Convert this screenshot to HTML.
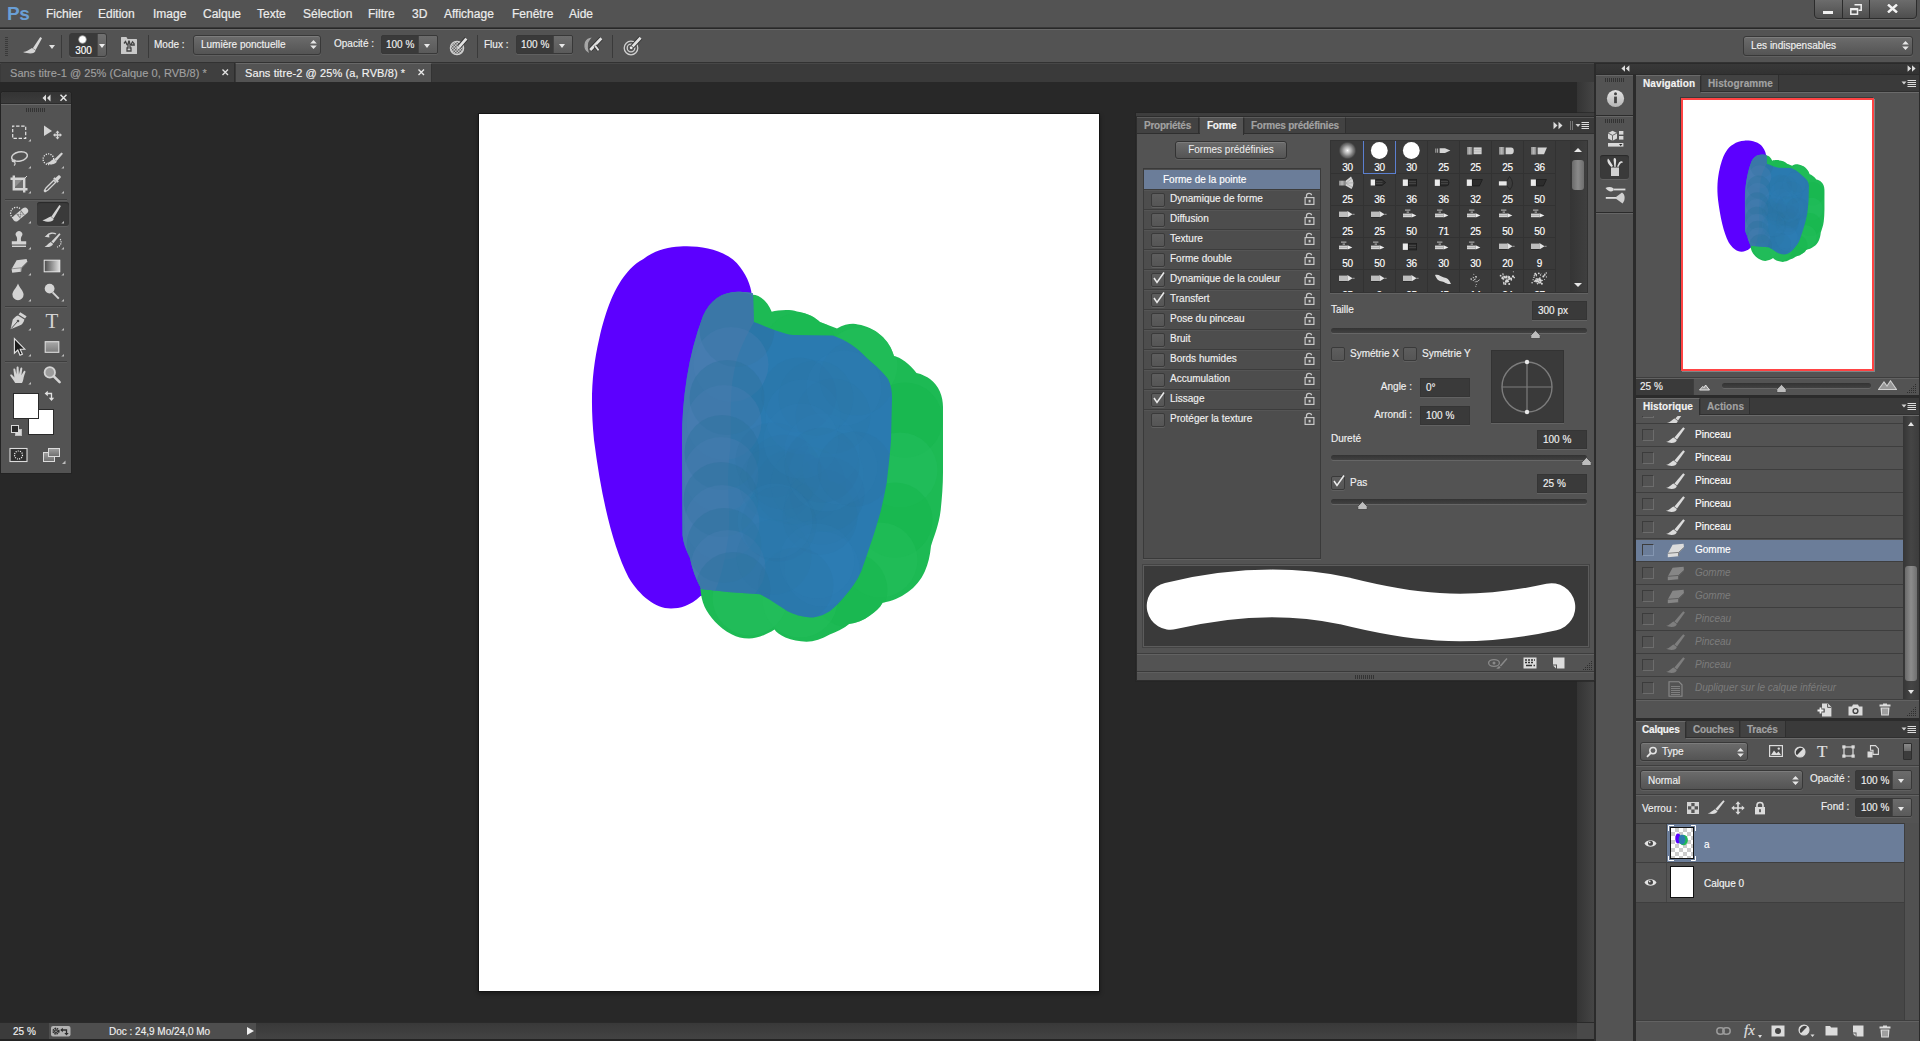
<!DOCTYPE html>
<html><head><meta charset="utf-8">
<style>
*{box-sizing:border-box;margin:0;padding:0}
html,body{width:1920px;height:1041px;overflow:hidden;background:#282828;font-family:"Liberation Sans",sans-serif;font-size:10px;color:#e8e8e8}
.a{position:absolute}
.t{position:absolute;white-space:nowrap;line-height:14px;-webkit-text-stroke:0.15px}
#menubar{left:0;top:0;width:1920px;height:28px;background:#535353;border-bottom:1px solid #383838}
#optbar{left:0;top:29px;width:1920px;height:34px;background:#535353;border-top:1px solid #686868;border-bottom:1px solid #323232}
#tabbar{left:0;top:63px;width:1595px;height:19px;background:#3a3a3a;box-shadow:inset 0 1px 0 #474747}
.m{position:absolute;-webkit-text-stroke:0.2px;top:7px;font-size:12px;line-height:14px;color:#ececec;white-space:nowrap}

.sep{position:absolute;top:5px;width:1px;height:23px;margin-left:1px;background:#3a3a3a}
.dd{position:absolute;border:1px solid #383838;border-radius:3px;background:linear-gradient(#6c6c6c,#545454);box-shadow:inset 0 1px 0 #7c7c7c,0 1px 0 #606060;color:#f0f0f0;font-size:10px}
.dd .t{left:7px}
.ud{position:absolute;width:7px;height:11px}
.inp{position:absolute;height:19px;border:1px solid #383838;border-radius:2px;background:#3a3a3a;box-shadow:0 1px 0 #606060;color:#f0f0f0;font-size:10px;overflow:hidden}
.inp .btn{position:absolute;right:0;top:0;bottom:0;width:19px;background:linear-gradient(#6c6c6c,#5a5a5a);border-left:1px solid #444}
.inp .btn:after{content:"";position:absolute;left:5px;top:8px;border:3.5px solid transparent;border-top:4px solid #e8e8e8;border-bottom:0}
.lbl{position:absolute;-webkit-text-stroke:0.15px;font-size:10px;line-height:14px;color:#f0f0f0;white-space:nowrap}
.b{font-weight:bold}
.cb{position:absolute;width:14px;height:14px;border:1px solid #3a3a3a;border-radius:2px;background:linear-gradient(#5e5e5e,#555);box-shadow:0 1px 0 #606060}
.fld{position:absolute;height:19px;background:#3a3a3a;border:1px solid #353535;box-shadow:0 1px 0 #626262;color:#f0f0f0}
</style></head><body>
<!-- MENUBAR -->
<div id="menubar" class="a">
<div class="a" style="left:7px;top:2px;font-size:19px;line-height:24px;font-weight:bold;color:#6a9fd6;letter-spacing:-0.3px">Ps</div>
<div class="m" style="left:46px">Fichier</div>
<div class="m" style="left:98px">Edition</div>
<div class="m" style="left:153px">Image</div>
<div class="m" style="left:203px">Calque</div>
<div class="m" style="left:257px">Texte</div>
<div class="m" style="left:303px">Sélection</div>
<div class="m" style="left:368px">Filtre</div>
<div class="m" style="left:412px">3D</div>
<div class="m" style="left:444px">Affichage</div>
<div class="m" style="left:512px">Fenêtre</div>
<div class="m" style="left:569px">Aide</div>
<div class="a" style="left:1814px;top:-1px;width:103px;height:20px;border:1px solid #2c2c2c;border-radius:0 0 4px 4px;background:linear-gradient(#6c6c6c,#4e4e4e);box-shadow:0 1px 0 #676767"></div>
<div class="a" style="left:1842px;top:0;width:1px;height:18px;background:#2c2c2c"></div><div class="a" style="left:1869px;top:0;width:1px;height:18px;background:#2c2c2c"></div>
<div class="a" style="left:1823px;top:11px;width:10px;height:3px;background:#f0f0f0"></div>
<svg class="a" style="left:1850px;top:4px" width="12" height="11" viewBox="0 0 12 11"><path d="M4.5 0.8 H11.2 V6.2 H8.5" fill="none" stroke="#f0f0f0" stroke-width="1.5"/><rect x="0.8" y="4.8" width="6.7" height="5.4" fill="none" stroke="#f0f0f0" stroke-width="1.5"/><path d="M0.8 5.2 H7.5" stroke="#f0f0f0" stroke-width="2.2"/></svg>
<svg class="a" style="left:1887px;top:4px" width="11" height="9" viewBox="0 0 11 9"><path d="M1 0.5 L10 8.5 M10 0.5 L1 8.5" stroke="#f4f4f4" stroke-width="2.4"/></svg>
</div>
<!-- OPTBAR -->
<div id="optbar" class="a">
<div class="a" style="left:5px;top:7px;width:3px;height:20px;background:repeating-linear-gradient(#3a3a3a 0 1px,transparent 1px 2px)"></div>
<svg class="a" style="left:22px;top:7px" width="20" height="17" viewBox="0 0 20 17"><path d="M18.3 0.1 L20 1.2 L13.6 13 L10.8 11.2Z" fill="#d8d8d8"/><path d="M10 11 L13.6 13.6 C13 16.8 7.5 17.4 1 15 C5 14.6 7 12.6 10 11Z" fill="#d4d4d4"/></svg>
<div class="a" style="left:49px;top:15px;border:3px solid transparent;border-top:4px solid #e0e0e0;border-bottom:0"></div>
<div class="sep" style="left:60px"></div>
<div class="a" style="left:69px;top:3px;width:38px;height:24px;border:1px solid #3a3a3a;border-radius:3px;background:#3a3a3a;box-shadow:0 1px 0 #636363;overflow:hidden">
 <div class="a" style="left:8px;top:1px;width:9px;height:9px;border-radius:50%;background:radial-gradient(#fff 45%,rgba(255,255,255,0) 75%)"></div>
 <div class="t" style="left:0;width:27px;text-align:center;top:10px;font-size:10px;line-height:13px;color:#fff">300</div>
 <div class="a" style="left:27px;top:0;width:10px;height:23px;background:linear-gradient(#707070,#5c5c5c);border-left:1px solid #484848"></div>
 <div class="a" style="left:29px;top:10px;border:3px solid transparent;border-top:4px solid #eee;border-bottom:0"></div>
</div>
<svg class="a" style="left:120px;top:6px" width="18" height="19" viewBox="0 0 18 19"><path d="M1 3 V1.6 Q1 1 1.6 1 H6.4 L7.6 3 H16.4 Q17 3 17 3.6 V17.4 Q17 18 16.4 18 H1.6 Q1 18 1 17.4Z" fill="#c9c9c9"/><path d="M4 7.5 L5.5 5.5 L7 8.5 L8 8.5 L8 12 L7 12 L7 15 L11 15 L11 12 L10 12 L10 8.5 L9.2 5.2 L8.8 5.2 L8 8.5 M10 8.5 L11 8.5 L12.5 5.8 L14 7.5 L14.2 9 L11 9" fill="none" stroke="#444" stroke-width="1.3"/></svg>
<div class="sep" style="left:147px"></div>
<div class="lbl" style="left:154px;top:8px">Mode :</div>
<div class="dd" style="left:193px;top:5px;width:128px;height:20px"><div class="t" style="top:2px">Lumière ponctuelle</div>
 <svg class="ud" style="left:116px;top:3px" viewBox="0 0 7 11"><path d="M0.2 4.4 L3.5 1 L6.8 4.4Z M0.2 6.6 L3.5 10 L6.8 6.6Z" fill="#e6e6e6"/></svg></div>
<div class="lbl" style="left:334px;top:7px">Opacité :</div>
<div class="inp" style="left:381px;top:5px;width:57px"><div class="t" style="left:4px;top:2px">100 %</div><div class="btn"></div></div>
<svg class="a" style="left:449px;top:7px" width="20" height="19" viewBox="0 0 20 19"><defs><pattern id="ck" width="3" height="3" patternUnits="userSpaceOnUse"><rect width="3" height="3" fill="#c4c4c4"/><rect width="1.5" height="1.5" fill="#666"/><rect x="1.5" y="1.5" width="1.5" height="1.5" fill="#666"/></pattern></defs><circle cx="8" cy="11" r="6.6" fill="url(#ck)" stroke="#d0d0d0" stroke-width="1.3"/><path d="M17.4 1.6 L10.4 9.6" stroke="#333" stroke-width="4.6" stroke-linecap="butt"/><path d="M17.4 1.6 L10.4 9.6" stroke="#e2e2e2" stroke-width="2.8"/><path d="M10.8 9.2 L8.4 11.6" stroke="#e2e2e2" stroke-width="1.6"/></svg>
<div class="sep" style="left:476px"></div>
<svg class="a" style="left:583px;top:7px" width="21" height="17" viewBox="0 0 21 17"><path d="M7 1.6 C1 3 0.5 11.5 5 14.6 C3.6 10 4 5 7 1.6Z" fill="#a8a8a8" stroke="#a8a8a8" stroke-width="1.2"/><path d="M18.4 1.2 L7.2 13" stroke="#333" stroke-width="4.6" stroke-linecap="butt"/><path d="M18.4 1.2 L7.2 13" stroke="#e2e2e2" stroke-width="2.8"/><path d="M12 8.6 L15.6 13.4" stroke="#333" stroke-width="3.4"/><path d="M12 8.6 L15.6 13.4" stroke="#e2e2e2" stroke-width="1.8"/></svg>
<svg class="a" style="left:622px;top:6px" width="21" height="20" viewBox="0 0 21 20"><circle cx="9" cy="12" r="6.8" fill="none" stroke="#cfcfcf" stroke-width="1.3"/><circle cx="9" cy="12" r="3.8" fill="none" stroke="#cfcfcf" stroke-width="1.3"/><path d="M18.6 1.8 L10.6 10.4" stroke="#333" stroke-width="4.6" stroke-linecap="butt"/><path d="M18.6 1.8 L10.6 10.4" stroke="#e2e2e2" stroke-width="2.8"/><circle cx="9.2" cy="11.8" r="1.4" fill="#f0f0f0"/></svg>
<div class="lbl" style="left:484px;top:8px">Flux :</div>
<div class="inp" style="left:516px;top:5px;width:57px"><div class="t" style="left:4px;top:2px">100 %</div><div class="btn"></div></div>
<div class="sep" style="left:611px"></div>
<div class="dd" style="left:1743px;top:6px;width:170px;height:20px"><div class="t" style="top:2px">Les indispensables</div>
 <svg class="ud" style="left:158px;top:3px" viewBox="0 0 7 11"><path d="M0.2 4.4 L3.5 1 L6.8 4.4Z M0.2 6.6 L3.5 10 L6.8 6.6Z" fill="#e6e6e6"/></svg></div>
</div>
<!-- TABBAR -->
<div id="tabbar" class="a">
<div class="a" style="left:1px;top:0;width:234px;height:19px;background:#3f3f3f;border-right:1px solid #2e2e2e"></div>
<div class="t" style="left:10px;top:3px;font-size:11px;letter-spacing:0.05px;color:#a0a0a0">Sans titre-1 @ 25% (Calque 0, RVB/8) *</div>
<svg class="a" style="left:222px;top:6px" width="7" height="7" viewBox="0 0 7 7"><path d="M0.5 0.5 L6 6 M6 0.5 L0.5 6" stroke="#e0e0e0" stroke-width="1.4"/></svg>
<div class="a" style="left:236px;top:0;width:196px;height:19px;background:#535353;border-right:1px solid #333;border-top:1px solid #686868"></div>
<div class="t" style="left:245px;top:3px;font-size:11px;letter-spacing:0.1px;color:#f2f2f2">Sans titre-2 @ 25% (a, RVB/8) *</div>
<svg class="a" style="left:418px;top:6px" width="7" height="7" viewBox="0 0 7 7"><path d="M0.5 0.5 L6 6 M6 0.5 L0.5 6" stroke="#e8e8e8" stroke-width="1.4"/></svg>
</div>
<!-- doc scrollbars -->
<div class="a" style="left:1577px;top:82px;width:17px;height:940px;background:linear-gradient(90deg,#343434,#454545)"></div>
<div class="a" style="left:1594px;top:63px;width:2px;height:978px;background:#2b2b2b"></div>
<!-- CANVAS -->
<div id="canvas" class="a" style="left:479px;top:114px;width:620px;height:877px;background:#fff;box-shadow:0 0 0 1px #141414,0 2px 4px 1px rgba(0,0,0,.35)"></div><svg class="a" style="left:479px;top:114px" width="620" height="877" viewBox="479 114 620 877"><defs><path id="bp" d="M680 246.5 C700 245 728 250 740 267 C748 278 752 288 752 300 L755 480 C755 540 735 590 700.5 596 C690 606 680 608.5 671 608.5 C655 608 640 596 628.6 577.4 C612 545 601 495 594 440 C590 400 592 370 599.2 338.7 C606 310 612 296 618.4 285 C626 272 634 264 643.4 259 C655 250 668 247 680 246.5Z"/><path id="bg" d="M720 320 L751.6 294.8 C758 294 767 300 771.7 311.7 C778 310 790 309 797 311.5 C808 313 816 318 820 322 L837 328.5 C845 324 853 323 858 324.5 C875 327 890 340 894 356 C900 357 910 364 916.5 373 C922 374 927 377 930 379 C939 386 943 396 943 407 L943 472 C943 485 942 498 940.7 510 C939 525 934 536 931 546 C930 556 928 564 925 571 C921 580 915 587 908 592 C900 598 892 601 882.6 602.7 C880 608 875 612 870 615.4 C864 620 856 623 849 624 C843 629 836 632 829.7 634.4 C822 639 814 641.5 806.5 641.8 C799 641.5 792 640 785.4 637.6 C780 635 776 632 774.5 629.5 C766 635 757 638.5 749 638.6 C742 638.5 737 637 732 634.4 C725 631 719 626 715 621.7 C710 616 707 612 704.7 607 C702 601 701 595 700.5 590 L700 330Z"/><path id="bo" d="M737.5 291.7 C745 291.7 750 292.5 753 293.5 L753.7 322 C765 326 780 333 793 335 L833 335.4 C846 340 858 348 866.8 358 C876 366 883 372 888 379 C891 385 892 391 892 398 L891 440 C890 455 888 470 886.8 482 C885 492 883 502 880.5 512 C877 524 874 535 870 545.7 C867 555 864 563 861.4 571 C857 581 851 589 844.5 596.4 C840 602 835 607 829.7 611.2 C824 615 817 617.5 810.7 617.5 C802 617 794 614.5 787.5 611.2 C779 606 770 599 760 594.3 L728 592 L701.5 589 C696 580 692 568 690 558 C686 550 683 542 682.5 535 L682 440 C682 400 688 355 703 316 C710 300 722 292 737.5 291.7Z"/><clipPath id="co"><use href="#bo"/></clipPath><clipPath id="cp"><use href="#bp"/></clipPath><clipPath id="cg"><use href="#bg"/></clipPath></defs><g id="blob"><use href="#bp" fill="#5c00ff"/><use href="#bg" fill="#1dba54"/><g clip-path="url(#cg)"><circle cx="905" cy="420" r="37.5" fill="#16b64c" opacity=".55"/><circle cx="900" cy="470" r="37.5" fill="#23be5c" opacity=".55"/><circle cx="895" cy="520" r="37.5" fill="#16b64c" opacity=".55"/><circle cx="880" cy="560" r="37.5" fill="#22bd5a" opacity=".55"/><circle cx="850" cy="590" r="37.5" fill="#17b74e" opacity=".55"/><circle cx="800" cy="600" r="37.5" fill="#22bd5a" opacity=".55"/><circle cx="750" cy="598" r="37.5" fill="#24be5c" opacity=".55"/><circle cx="860" cy="365" r="37.5" fill="#22bd5a" opacity=".55"/><circle cx="800" cy="350" r="37.5" fill="#1ab950" opacity=".55"/></g><use href="#bo" fill="#2a7ab0"/><g clip-path="url(#co)"><path d="M670 285 L754 285 L754 322 C747 335 738 350 734 372 C728 400 733 430 729 460 C726 490 732 520 727 545 C724 565 720 580 714 594 L670 594Z" fill="#447baf"/><circle cx="737" cy="329.5" r="37.5" fill="#2b719c" opacity=".38"/><circle cx="731" cy="364.5" r="37.5" fill="#4a7db4" opacity=".38"/><circle cx="727" cy="397.5" r="37.5" fill="#2b719c" opacity=".38"/><circle cx="724" cy="422.5" r="37.5" fill="#4a7db4" opacity=".38"/><circle cx="722" cy="452.5" r="37.5" fill="#2b719c" opacity=".38"/><circle cx="721" cy="474.5" r="37.5" fill="#4a7db4" opacity=".38"/><circle cx="721" cy="499.5" r="37.5" fill="#2b719c" opacity=".38"/><circle cx="722" cy="522.5" r="37.5" fill="#4a7db4" opacity=".38"/><circle cx="724" cy="545.5" r="37.5" fill="#2b719c" opacity=".38"/><circle cx="728" cy="567.5" r="37.5" fill="#4a7db4" opacity=".38"/><circle cx="733" cy="589.5" r="37.5" fill="#2b719c" opacity=".38"/><circle cx="799" cy="395" r="37.5" fill="#2a6f9e" opacity=".16"/><circle cx="777" cy="483" r="37.5" fill="#2b749f" opacity=".16"/><circle cx="822" cy="569" r="37.5" fill="#2f82c0" opacity=".16"/><circle cx="773" cy="460" r="37.5" fill="#2a6f9e" opacity=".16"/><circle cx="792" cy="487" r="37.5" fill="#2a6f9e" opacity=".16"/><circle cx="844" cy="388" r="37.5" fill="#2f82c0" opacity=".16"/><circle cx="827" cy="494" r="37.5" fill="#2a6f9e" opacity=".16"/><circle cx="822" cy="451" r="37.5" fill="#2f82c0" opacity=".16"/><circle cx="774" cy="557" r="37.5" fill="#2b749f" opacity=".16"/><circle cx="808" cy="484" r="37.5" fill="#2b749f" opacity=".16"/><circle cx="820" cy="517" r="37.5" fill="#2a6f9e" opacity=".16"/><circle cx="822" cy="507" r="37.5" fill="#2b749f" opacity=".16"/><circle cx="779" cy="524" r="37.5" fill="#2a6f9e" opacity=".16"/><circle cx="826" cy="474" r="37.5" fill="#3380bc" opacity=".16"/><circle cx="840" cy="467" r="37.5" fill="#3380bc" opacity=".16"/><circle cx="803" cy="417" r="37.5" fill="#2f82c0" opacity=".16"/><circle cx="833" cy="416" r="37.5" fill="#2b749f" opacity=".16"/><circle cx="817" cy="561" r="37.5" fill="#3380bc" opacity=".16"/><circle cx="796" cy="585" r="37.5" fill="#2a6f9e" opacity=".16"/><circle cx="816" cy="398" r="37.5" fill="#2b749f" opacity=".16"/><circle cx="784" cy="472" r="37.5" fill="#2a6f9e" opacity=".16"/><circle cx="857" cy="378" r="37.5" fill="#2b749f" opacity=".16"/><circle cx="801" cy="441" r="37.5" fill="#3380bc" opacity=".16"/><circle cx="822" cy="465" r="37.5" fill="#2a6f9e" opacity=".16"/><circle cx="855" cy="469" r="37.5" fill="#2a6f9e" opacity=".16"/><circle cx="775" cy="521" r="37.5" fill="#3380bc" opacity=".16"/></g></g></svg>
<!-- TOOLS -->
<div class="a" style="left:1px;top:92px;width:70px;height:381px;background:#535353;border-radius:3px 3px 0 0;box-shadow:0 0 0 1px #232323"></div>
<div class="a" style="left:1px;top:92px;width:70px;height:12px;background:linear-gradient(#343434,#3b3b3b);border-radius:3px 3px 0 0;border-bottom:1px solid #2c2c2c"></div>
<div class="a" style="left:1px;top:104px;width:70px;height:1px;background:#6a6a6a"></div>
<svg class="a" style="left:42px;top:94px" width="26" height="8" viewBox="0 0 26 8"><path d="M4 0.5 V7.5 L0.5 4Z M8.5 0.5 V7.5 L5 4Z" fill="#dcdcdc"/><path d="M18.5 0.8 L24.5 6.8 M24.5 0.8 L18.5 6.8" stroke="#e4e4e4" stroke-width="1.5"/></svg>
<div class="a" style="left:26px;top:108px;width:20px;height:4px;background:repeating-linear-gradient(90deg,#333 0 1px,transparent 1px 2px)"></div>
<div class="a" style="left:37px;top:202px;width:32px;height:24px;background:#3a3a3a;border-radius:3px;box-shadow:inset 0 1px 1px #2a2a2a,0 1px 0 #606060"></div>
<div class="a" style="left:5px;top:199px;width:62px;height:2px;border-top:1px solid #3e3e3e;border-bottom:1px solid #5d5d5d"></div>
<div class="a" style="left:5px;top:306px;width:62px;height:2px;border-top:1px solid #3e3e3e;border-bottom:1px solid #5d5d5d"></div>
<div class="a" style="left:5px;top:361px;width:62px;height:2px;border-top:1px solid #3e3e3e;border-bottom:1px solid #5d5d5d"></div>
<svg class="a" style="left:7px;top:120px" width="24" height="24" viewBox="0 0 24 24"><rect x="5.7" y="6.1" width="13" height="12.2" fill="none" stroke="#e4e4e4" stroke-width="1.2" stroke-dasharray="3.4 1.7" stroke-dashoffset="1.7"/><path d="M25 19.5 V23 H21.5Z" fill="#bdbdbd" transform="translate(-0.2,-1.4)"/></svg>
<svg class="a" style="left:40px;top:120px" width="24" height="24" viewBox="0 0 24 24"><path d="M4 5.5 V16 L12 11Z" fill="#d4d4d4"/><path d="M17.5 10.5 L19.5 12.8 H18.2 V14.3 H19.7 V13 L22 15 L19.7 17 V15.7 H18.2 V17.2 H19.5 L17.5 19.5 L15.5 17.2 H16.8 V15.7 H15.3 V17 L13 15 L15.3 13 V14.3 H16.8 V12.8 H15.5Z" fill="#d4d4d4"/></svg>
<svg class="a" style="left:7px;top:147px" width="24" height="24" viewBox="0 0 24 24"><ellipse cx="12.5" cy="9.5" rx="8" ry="4.6" transform="rotate(-12 12.5 9.5)" fill="none" stroke="#d4d4d4" stroke-width="1.5"/><path d="M6 12 C4.5 13 5 15 7 14.6 C9 14.2 8 12.6 6.8 13.2 M7.2 14.6 C8.6 16 8.2 17.5 7 18.5" fill="none" stroke="#d4d4d4" stroke-width="1.2"/><path d="M25 19.5 V23 H21.5Z" fill="#bdbdbd" transform="translate(-0.2,-1.4)"/></svg>
<svg class="a" style="left:40px;top:147px" width="24" height="24" viewBox="0 0 24 24"><circle cx="8.4" cy="12.2" r="5.3" fill="none" stroke="#e6e6e6" stroke-width="1.3" stroke-dasharray="1.2 1.2"/><path d="M21.4 5.4 L23 6.8 L16.6 14 L14.4 12.2Z" fill="#d4d4d4"/><path d="M14 12 L16.8 14.4 C15.8 17.2 11 18.2 6 16.2 C9.6 15.8 11 13.2 14 12Z" fill="#d4d4d4"/><path d="M25 19.5 V23 H21.5Z" fill="#bdbdbd" transform="translate(-0.2,-1.4)"/></svg>
<svg class="a" style="left:7px;top:172px" width="24" height="24" viewBox="0 0 24 24"><path d="M6.8 3.5 V17.2 H20.5 M3.5 6.8 H17.2 V20.5" fill="none" stroke="#d4d4d4" stroke-width="2.4"/><path d="M8 16 L20 4" stroke="#d4d4d4" stroke-width="1"/><path d="M8 8 H16 V16 H8Z" fill="#6e6e6e"/><path d="M8 8 H15 L8 15Z" fill="#909090"/><path d="M25 19.5 V23 H21.5Z" fill="#bdbdbd" transform="translate(-0.2,-1.4)"/></svg>
<svg class="a" style="left:40px;top:172px" width="24" height="24" viewBox="0 0 24 24"><path d="M18.2 3.4 C19.6 2.4 21.6 4.4 20.6 5.8 L18 8.6 L18.8 9.4 L17.4 10.8 L13.2 6.6 L14.6 5.2 L15.4 6Z" fill="#d4d4d4"/><path d="M13.8 8.2 L15.8 10.2 L8 18 L5.5 19.5 L4.5 18.5 L6 16Z" fill="none" stroke="#d4d4d4" stroke-width="1.3"/><path d="M4.3 19.7 L5.8 18.2" stroke="#d4d4d4" stroke-width="2"/><path d="M25 19.5 V23 H21.5Z" fill="#bdbdbd" transform="translate(-0.2,-1.4)"/></svg>
<svg class="a" style="left:7px;top:202px" width="24" height="24" viewBox="0 0 24 24"><path d="M6 16 A5.5 5.5 0 1 1 13 6.5" fill="none" stroke="#e6e6e6" stroke-width="1.3" stroke-dasharray="1.2 1.2"/><rect x="4.5" y="9.3" width="18" height="6.4" rx="3.2" transform="rotate(-40 13.5 12.5)" fill="#d4d4d4"/><g transform="rotate(-40 13.5 12.5)" fill="#777"><rect x="10.6" y="9.3" width="0.9" height="6.4"/><rect x="15.6" y="9.3" width="0.9" height="6.4"/><circle cx="12.3" cy="11.3" r=".6"/><circle cx="14.5" cy="11.3" r=".6"/><circle cx="12.3" cy="13.7" r=".6"/><circle cx="14.5" cy="13.7" r=".6"/><circle cx="13.4" cy="12.5" r=".6"/></g><path d="M25 19.5 V23 H21.5Z" fill="#bdbdbd" transform="translate(-0.2,-1.4)"/></svg>
<svg class="a" style="left:40px;top:202px" width="24" height="24" viewBox="0 0 24 24"><path d="M19.4 3 L20.9 4 L13.6 16.4 L11.2 14.8Z" fill="#d4d4d4"/><path d="M10.6 14.6 L13.7 17 C13 19.8 8.2 20.8 2.4 18.2 C6.2 17.7 7.5 15.8 10.6 14.6Z" fill="#d4d4d4"/><path d="M25 19.5 V23 H21.5Z" fill="#bdbdbd" transform="translate(-0.2,-1.4)"/></svg>
<svg class="a" style="left:7px;top:228px" width="24" height="24" viewBox="0 0 24 24"><path d="M9.5 8.6 A3.3 3.3 0 1 1 14.5 8.6 C13.6 10.2 13.8 12 14.2 13.2 H19.2 V16.5 H4.8 V13.2 H9.8 C10.2 12 10.4 10.2 9.5 8.6Z" fill="#d4d4d4"/><rect x="5" y="17.6" width="14" height="1.4" fill="#d4d4d4"/><path d="M25 19.5 V23 H21.5Z" fill="#bdbdbd" transform="translate(-0.2,-1.4)"/></svg>
<svg class="a" style="left:40px;top:228px" width="24" height="24" viewBox="0 0 24 24"><path d="M19.3 5.2 L20.6 6.3 L13.4 15.2 L11.4 13.6Z" fill="#d4d4d4"/><path d="M10.8 14 L13.1 15.9 C12.2 18.2 8.7 19.6 4.6 18.8 C7.4 17.8 7.8 15.4 10.8 14Z" fill="#d4d4d4"/><path d="M7 8 C9 5 13 4.4 16 6" fill="none" stroke="#d4d4d4" stroke-width="1.4"/><path d="M4.6 8.8 L9 5.6 L9.4 9.6Z" fill="#d4d4d4"/><path d="M17 19 A5 5 0 0 0 19.6 10.5" fill="none" stroke="#e6e6e6" stroke-width="1.2" stroke-dasharray="1.1 1.1"/><path d="M25 19.5 V23 H21.5Z" fill="#bdbdbd" transform="translate(-0.2,-1.4)"/></svg>
<svg class="a" style="left:7px;top:254px" width="24" height="24" viewBox="0 0 24 24"><path d="M9.6 6.2 L19.6 5 L20.4 8 L14.4 14.2 L14 17.8 L5.2 18.8 L4.6 15 Z" fill="#d4d4d4"/><path d="M4.8 14.8 L14.2 13.8 L20.2 7.8" fill="none" stroke="#8a8a8a" stroke-width="0.9"/><path d="M14.2 13.8 L14 17.6" stroke="#8a8a8a" stroke-width="0.9"/><path d="M25 19.5 V23 H21.5Z" fill="#bdbdbd" transform="translate(-0.2,-1.4)"/></svg>
<svg class="a" style="left:40px;top:254px" width="24" height="24" viewBox="0 0 24 24"><defs><linearGradient id="gg"><stop offset="0" stop-color="#4a4a4a"/><stop offset="1" stop-color="#e0e0e0"/></linearGradient></defs><rect x="4.2" y="6.2" width="15.6" height="11.6" fill="url(#gg)" stroke="#e8e8e8" stroke-width="1"/><path d="M25 19.5 V23 H21.5Z" fill="#bdbdbd" transform="translate(-0.2,-1.4)"/></svg>
<svg class="a" style="left:7px;top:280px" width="24" height="24" viewBox="0 0 24 24"><path d="M11 3.6 C12.4 8 16.6 11 16.6 14.6 A5.6 5.6 0 0 1 5.4 14.6 C5.4 11 9.6 8 11 3.6Z" fill="#d4d4d4"/><path d="M25 19.5 V23 H21.5Z" fill="#bdbdbd" transform="translate(-0.2,-1.4)"/></svg>
<svg class="a" style="left:40px;top:280px" width="24" height="24" viewBox="0 0 24 24"><circle cx="9.6" cy="8.6" r="4.9" fill="#d4d4d4"/><path d="M12.6 12.4 L18.8 18.6" stroke="#d4d4d4" stroke-width="2"/><path d="M25 19.5 V23 H21.5Z" fill="#bdbdbd" transform="translate(-0.2,-1.4)"/></svg>
<svg class="a" style="left:7px;top:309px" width="24" height="24" viewBox="0 0 24 24"><path d="M13.2 3.2 L19.6 7.2 L18 9.6 L11.6 5.6Z" fill="#d4d4d4"/><path d="M11 6.4 L17.4 10.4 C16.8 13.4 15 15.4 12.6 16.6 L3.6 20.2 L5.8 10.6 C7.4 8.4 9 7 11 6.4Z" fill="#d4d4d4"/><path d="M4.2 19.6 L10.6 12.4" stroke="#555" stroke-width="1"/><circle cx="11" cy="12" r="1.3" fill="#555"/><path d="M25 19.5 V23 H21.5Z" fill="#bdbdbd" transform="translate(-0.2,-1.4)"/></svg>
<svg class="a" style="left:40px;top:309px" width="24" height="24" viewBox="0 0 24 24"><text x="12" y="19.4" text-anchor="middle" font-family="Liberation Serif" font-size="21" fill="#d4d4d4">T</text><path d="M25 19.5 V23 H21.5Z" fill="#bdbdbd" transform="translate(-0.2,-1.4)"/></svg>
<svg class="a" style="left:7px;top:335px" width="24" height="24" viewBox="0 0 24 24"><path d="M7.4 3.6 V18.2 L10.8 15 L13 20.2 L15.4 19.2 L13.2 14.2 H17.8Z" fill="#1e1e1e" stroke="#e4e4e4" stroke-width="1.1" stroke-linejoin="miter"/><path d="M25 19.5 V23 H21.5Z" fill="#bdbdbd" transform="translate(-0.2,-1.4)"/></svg>
<svg class="a" style="left:40px;top:335px" width="24" height="24" viewBox="0 0 24 24"><defs><linearGradient id="rg" x2="0" y2="1"><stop offset="0" stop-color="#a8a8a8"/><stop offset="1" stop-color="#7c7c7c"/></linearGradient></defs><rect x="5.2" y="6.7" width="13.6" height="10.6" fill="url(#rg)" stroke="#dcdcdc" stroke-width="1.1"/><path d="M25 19.5 V23 H21.5Z" fill="#bdbdbd" transform="translate(-0.2,-1.4)"/></svg>
<svg class="a" style="left:7px;top:363px" width="24" height="24" viewBox="0 0 24 24"><path d="M8.2 20 C6.4 17 4.2 14.6 3.2 12.6 C2.8 11.6 4.2 11 5 11.8 L7.4 14.4 L6.4 6.6 C6.2 5.2 8 5 8.3 6.3 L9.4 11.6 L9.6 4.6 C9.6 3.2 11.5 3.2 11.6 4.6 L11.9 11.4 L13.4 5.2 C13.7 3.9 15.5 4.3 15.3 5.7 L14.4 12.2 L16.6 8.4 C17.3 7.2 18.9 8 18.4 9.3 C17.4 12 16.8 13.6 16.4 16 C16.2 17.6 15.6 18.8 15 20Z" fill="#d4d4d4"/><path d="M25 19.5 V23 H21.5Z" fill="#bdbdbd" transform="translate(-0.2,-1.4)"/></svg>
<svg class="a" style="left:40px;top:363px" width="24" height="24" viewBox="0 0 24 24"><circle cx="9.8" cy="9.4" r="5.2" fill="#9c9c9c" stroke="#d4d4d4" stroke-width="1.8"/><path d="M13.8 13.4 L19.6 19.2" stroke="#d4d4d4" stroke-width="2.6" stroke-linecap="round"/></svg>
<div class="a" style="left:28px;top:409px;width:26px;height:26px;background:#fff;border:1px solid #2a2a2a;box-shadow:inset 0 0 0 1px #fff"></div>
<div class="a" style="left:13px;top:393px;width:26px;height:26px;background:#fff;border:1px solid #2a2a2a"></div>
<svg class="a" style="left:44px;top:390px" width="12" height="12" viewBox="0 0 12 12"><path d="M3 3.5 H7.5 V8" fill="none" stroke="#e0e0e0" stroke-width="1.3"/><path d="M0.6 3.5 L3.8 0.8 V6.2Z M7.5 11 L4.8 7.8 H10.2Z" fill="#e0e0e0"/></svg>
<div class="a" style="left:15px;top:429px;width:7px;height:7px;background:#d8d8d8;border:1px solid #bdbdbd"></div><div class="a" style="left:11px;top:425px;width:8px;height:8px;background:#2a2a2a;border:1px solid #d8d8d8"></div>
<svg class="a" style="left:9px;top:447px" width="20" height="16" viewBox="0 0 20 16"><rect x="1" y="1.5" width="17" height="13" fill="#2e2e2e" stroke="#dcdcdc" stroke-width="1.1"/><circle cx="9.5" cy="8" r="4" fill="none" stroke="#f0f0f0" stroke-width="1.2" stroke-dasharray="1.1 1.1"/></svg>
<svg class="a" style="left:42px;top:447px" width="24" height="18" viewBox="0 0 24 18"><defs><linearGradient id="sg" x2="0" y2="1"><stop offset="0" stop-color="#a0a0a0"/><stop offset="1" stop-color="#6e6e6e"/></linearGradient></defs><rect x="1.5" y="5.5" width="11" height="9" fill="url(#sg)" stroke="#dcdcdc"/><rect x="6.5" y="1.5" width="11" height="8" fill="url(#sg)" stroke="#dcdcdc"/><path d="M23.5 13.5 V17 H20Z" fill="#bdbdbd"/></svg>
<!-- TOOLS_END -->
<!-- BRUSHPANEL -->
<div class="a" style="left:1135px;top:112px;width:460px;height:570px;background:#232323;opacity:.6"></div>
<div class="a" style="left:1136px;top:113px;width:459px;height:568px;background:#2c2c2c"></div>
<div class="a" style="left:1136px;top:113px;width:458px;height:3px;background:#3d3d3d"></div>
<div class="a" style="left:1137px;top:117px;width:457px;height:563px;background:#535353"></div>
<div class="a" style="left:1137px;top:117px;width:457px;height:17px;background:#3a3a3a;border-bottom:1px solid #2f2f2f;border-top:1px solid #555"></div>
<div class="a" style="left:1137px;top:117px;width:62px;height:16px;background:#424242;border-right:1px solid #2f2f2f;border-top:1px solid #5a5a5a"></div>
<div class="a" style="left:1200px;top:117px;width:44px;height:18px;background:#535353;border-right:1px solid #2f2f2f;border-top:1px solid #6a6a6a"></div>
<div class="a" style="left:1245px;top:117px;width:101px;height:16px;background:#424242;border-right:1px solid #2f2f2f;border-top:1px solid #5a5a5a"></div>
<div class="t b" style="left:1144px;top:119px;color:#a2a2a2;letter-spacing:-0.25px">Propriétés</div>
<div class="t b" style="left:1207px;top:119px;color:#f4f4f4;letter-spacing:-0.25px">Forme</div>
<div class="t b" style="left:1251px;top:119px;color:#a2a2a2;letter-spacing:-0.25px">Formes prédéfinies</div>
<svg class="a" style="left:1553px;top:121px" width="38" height="9" viewBox="0 0 38 9"><path d="M0.5 0.8 L4.5 4.5 L0.5 8.2Z M5.5 0.8 L9.5 4.5 L5.5 8.2Z" fill="#dcdcdc"/><path d="M17.5 0 V9 M19.5 0 V9" stroke="#777" stroke-width="1"/><path d="M22.5 3 H27.5 L25 6Z" fill="#d0d0d0"/><path d="M28.5 1.5 H36 M28.5 3.5 H36 M28.5 5.5 H36 M28.5 7.5 H36" stroke="#dcdcdc" stroke-width="1"/></svg>
<div class="dd" style="left:1175px;top:141px;width:112px;height:18px;text-align:center;line-height:15px;border-color:#333">Formes prédéfinies</div>
<div class="a" style="left:1143px;top:168px;width:178px;height:391px;background:#4d4d4d;border:1px solid #3a3a3a;box-shadow:0 1px 0 #606060"></div>
<div class="a" style="left:1144px;top:170px;width:176px;height:19px;background:#6b7d99"></div>
<div class="t" style="left:1163px;top:173px;color:#fff">Forme de la pointe</div>
<div class="a" style="left:1144px;top:189px;width:176px;height:2px;background:#3c3c3c;border-bottom:1px solid #555"></div>
<div class="cb" style="left:1151px;top:193px"></div>
<div class="t" style="left:1170px;top:192px;color:#f0f0f0">Dynamique de forme</div>
<svg class="a" style="left:1304px;top:192px" width="11" height="13" viewBox="0 0 11 13"><path d="M2.5 6 V3.6 C2.5 0.6 7.5 0.6 7.5 3.2" fill="none" stroke="#c8c8c8" stroke-width="1.3"/><rect x="1.1" y="5.6" width="8.8" height="6.8" fill="#4d4d4d" stroke="#c8c8c8" stroke-width="1.2"/><rect x="4.6" y="7.8" width="2" height="2.6" fill="#c8c8c8"/></svg>
<div class="a" style="left:1144px;top:209px;width:176px;height:2px;background:#3c3c3c;border-bottom:1px solid #555"></div>
<div class="cb" style="left:1151px;top:213px"></div>
<div class="t" style="left:1170px;top:212px;color:#f0f0f0">Diffusion</div>
<svg class="a" style="left:1304px;top:212px" width="11" height="13" viewBox="0 0 11 13"><path d="M2.5 6 V3.6 C2.5 0.6 7.5 0.6 7.5 3.2" fill="none" stroke="#c8c8c8" stroke-width="1.3"/><rect x="1.1" y="5.6" width="8.8" height="6.8" fill="#4d4d4d" stroke="#c8c8c8" stroke-width="1.2"/><rect x="4.6" y="7.8" width="2" height="2.6" fill="#c8c8c8"/></svg>
<div class="a" style="left:1144px;top:229px;width:176px;height:2px;background:#3c3c3c;border-bottom:1px solid #555"></div>
<div class="cb" style="left:1151px;top:233px"></div>
<div class="t" style="left:1170px;top:232px;color:#f0f0f0">Texture</div>
<svg class="a" style="left:1304px;top:232px" width="11" height="13" viewBox="0 0 11 13"><path d="M2.5 6 V3.6 C2.5 0.6 7.5 0.6 7.5 3.2" fill="none" stroke="#c8c8c8" stroke-width="1.3"/><rect x="1.1" y="5.6" width="8.8" height="6.8" fill="#4d4d4d" stroke="#c8c8c8" stroke-width="1.2"/><rect x="4.6" y="7.8" width="2" height="2.6" fill="#c8c8c8"/></svg>
<div class="a" style="left:1144px;top:249px;width:176px;height:2px;background:#3c3c3c;border-bottom:1px solid #555"></div>
<div class="cb" style="left:1151px;top:253px"></div>
<div class="t" style="left:1170px;top:252px;color:#f0f0f0">Forme double</div>
<svg class="a" style="left:1304px;top:252px" width="11" height="13" viewBox="0 0 11 13"><path d="M2.5 6 V3.6 C2.5 0.6 7.5 0.6 7.5 3.2" fill="none" stroke="#c8c8c8" stroke-width="1.3"/><rect x="1.1" y="5.6" width="8.8" height="6.8" fill="#4d4d4d" stroke="#c8c8c8" stroke-width="1.2"/><rect x="4.6" y="7.8" width="2" height="2.6" fill="#c8c8c8"/></svg>
<div class="a" style="left:1144px;top:269px;width:176px;height:2px;background:#3c3c3c;border-bottom:1px solid #555"></div>
<div class="cb" style="left:1151px;top:273px"></div><svg class="a" style="left:1151px;top:271px" width="15" height="15" viewBox="0 0 15 15"><path d="M3 7 L6 11.5 L13 1.5" fill="none" stroke="#ececec" stroke-width="1.5"/></svg>
<div class="t" style="left:1170px;top:272px;color:#f0f0f0">Dynamique de la couleur</div>
<svg class="a" style="left:1304px;top:272px" width="11" height="13" viewBox="0 0 11 13"><path d="M2.5 6 V3.6 C2.5 0.6 7.5 0.6 7.5 3.2" fill="none" stroke="#c8c8c8" stroke-width="1.3"/><rect x="1.1" y="5.6" width="8.8" height="6.8" fill="#4d4d4d" stroke="#c8c8c8" stroke-width="1.2"/><rect x="4.6" y="7.8" width="2" height="2.6" fill="#c8c8c8"/></svg>
<div class="a" style="left:1144px;top:289px;width:176px;height:2px;background:#3c3c3c;border-bottom:1px solid #555"></div>
<div class="cb" style="left:1151px;top:293px"></div><svg class="a" style="left:1151px;top:291px" width="15" height="15" viewBox="0 0 15 15"><path d="M3 7 L6 11.5 L13 1.5" fill="none" stroke="#ececec" stroke-width="1.5"/></svg>
<div class="t" style="left:1170px;top:292px;color:#f0f0f0">Transfert</div>
<svg class="a" style="left:1304px;top:292px" width="11" height="13" viewBox="0 0 11 13"><path d="M2.5 6 V3.6 C2.5 0.6 7.5 0.6 7.5 3.2" fill="none" stroke="#c8c8c8" stroke-width="1.3"/><rect x="1.1" y="5.6" width="8.8" height="6.8" fill="#4d4d4d" stroke="#c8c8c8" stroke-width="1.2"/><rect x="4.6" y="7.8" width="2" height="2.6" fill="#c8c8c8"/></svg>
<div class="a" style="left:1144px;top:309px;width:176px;height:2px;background:#3c3c3c;border-bottom:1px solid #555"></div>
<div class="cb" style="left:1151px;top:313px"></div>
<div class="t" style="left:1170px;top:312px;color:#f0f0f0">Pose du pinceau</div>
<svg class="a" style="left:1304px;top:312px" width="11" height="13" viewBox="0 0 11 13"><path d="M2.5 6 V3.6 C2.5 0.6 7.5 0.6 7.5 3.2" fill="none" stroke="#c8c8c8" stroke-width="1.3"/><rect x="1.1" y="5.6" width="8.8" height="6.8" fill="#4d4d4d" stroke="#c8c8c8" stroke-width="1.2"/><rect x="4.6" y="7.8" width="2" height="2.6" fill="#c8c8c8"/></svg>
<div class="a" style="left:1144px;top:329px;width:176px;height:2px;background:#3c3c3c;border-bottom:1px solid #555"></div>
<div class="cb" style="left:1151px;top:333px"></div>
<div class="t" style="left:1170px;top:332px;color:#f0f0f0">Bruit</div>
<svg class="a" style="left:1304px;top:332px" width="11" height="13" viewBox="0 0 11 13"><path d="M2.5 6 V3.6 C2.5 0.6 7.5 0.6 7.5 3.2" fill="none" stroke="#c8c8c8" stroke-width="1.3"/><rect x="1.1" y="5.6" width="8.8" height="6.8" fill="#4d4d4d" stroke="#c8c8c8" stroke-width="1.2"/><rect x="4.6" y="7.8" width="2" height="2.6" fill="#c8c8c8"/></svg>
<div class="a" style="left:1144px;top:349px;width:176px;height:2px;background:#3c3c3c;border-bottom:1px solid #555"></div>
<div class="cb" style="left:1151px;top:353px"></div>
<div class="t" style="left:1170px;top:352px;color:#f0f0f0">Bords humides</div>
<svg class="a" style="left:1304px;top:352px" width="11" height="13" viewBox="0 0 11 13"><path d="M2.5 6 V3.6 C2.5 0.6 7.5 0.6 7.5 3.2" fill="none" stroke="#c8c8c8" stroke-width="1.3"/><rect x="1.1" y="5.6" width="8.8" height="6.8" fill="#4d4d4d" stroke="#c8c8c8" stroke-width="1.2"/><rect x="4.6" y="7.8" width="2" height="2.6" fill="#c8c8c8"/></svg>
<div class="a" style="left:1144px;top:369px;width:176px;height:2px;background:#3c3c3c;border-bottom:1px solid #555"></div>
<div class="cb" style="left:1151px;top:373px"></div>
<div class="t" style="left:1170px;top:372px;color:#f0f0f0">Accumulation</div>
<svg class="a" style="left:1304px;top:372px" width="11" height="13" viewBox="0 0 11 13"><path d="M2.5 6 V3.6 C2.5 0.6 7.5 0.6 7.5 3.2" fill="none" stroke="#c8c8c8" stroke-width="1.3"/><rect x="1.1" y="5.6" width="8.8" height="6.8" fill="#4d4d4d" stroke="#c8c8c8" stroke-width="1.2"/><rect x="4.6" y="7.8" width="2" height="2.6" fill="#c8c8c8"/></svg>
<div class="a" style="left:1144px;top:389px;width:176px;height:2px;background:#3c3c3c;border-bottom:1px solid #555"></div>
<div class="cb" style="left:1151px;top:393px"></div><svg class="a" style="left:1151px;top:391px" width="15" height="15" viewBox="0 0 15 15"><path d="M3 7 L6 11.5 L13 1.5" fill="none" stroke="#ececec" stroke-width="1.5"/></svg>
<div class="t" style="left:1170px;top:392px;color:#f0f0f0">Lissage</div>
<svg class="a" style="left:1304px;top:392px" width="11" height="13" viewBox="0 0 11 13"><path d="M2.5 6 V3.6 C2.5 0.6 7.5 0.6 7.5 3.2" fill="none" stroke="#c8c8c8" stroke-width="1.3"/><rect x="1.1" y="5.6" width="8.8" height="6.8" fill="#4d4d4d" stroke="#c8c8c8" stroke-width="1.2"/><rect x="4.6" y="7.8" width="2" height="2.6" fill="#c8c8c8"/></svg>
<div class="a" style="left:1144px;top:409px;width:176px;height:2px;background:#3c3c3c;border-bottom:1px solid #555"></div>
<div class="cb" style="left:1151px;top:413px"></div>
<div class="t" style="left:1170px;top:412px;color:#f0f0f0">Protéger la texture</div>
<svg class="a" style="left:1304px;top:412px" width="11" height="13" viewBox="0 0 11 13"><path d="M2.5 6 V3.6 C2.5 0.6 7.5 0.6 7.5 3.2" fill="none" stroke="#c8c8c8" stroke-width="1.3"/><rect x="1.1" y="5.6" width="8.8" height="6.8" fill="#4d4d4d" stroke="#c8c8c8" stroke-width="1.2"/><rect x="4.6" y="7.8" width="2" height="2.6" fill="#c8c8c8"/></svg>
<div class="a" style="left:1330px;top:140px;width:258px;height:153px;background:#3a3a3a;border:1px solid #333;box-shadow:0 1px 0 #636363;overflow:hidden">
<div class="a" style="left:32px;top:0;width:1px;height:152px;background:#323232"></div>
<div class="a" style="left:64px;top:0;width:1px;height:152px;background:#323232"></div>
<div class="a" style="left:96px;top:0;width:1px;height:152px;background:#323232"></div>
<div class="a" style="left:128px;top:0;width:1px;height:152px;background:#323232"></div>
<div class="a" style="left:160px;top:0;width:1px;height:152px;background:#323232"></div>
<div class="a" style="left:192px;top:0;width:1px;height:152px;background:#323232"></div>
<div class="a" style="left:224px;top:0;width:1px;height:152px;background:#323232"></div>
<div class="a" style="left:0;top:32px;width:225px;height:1px;background:#323232"></div>
<div class="a" style="left:0;top:64px;width:225px;height:1px;background:#323232"></div>
<div class="a" style="left:0;top:96px;width:225px;height:1px;background:#323232"></div>
<div class="a" style="left:0;top:128px;width:225px;height:1px;background:#323232"></div>
<svg class="a" style="left:0;top:0" width="226" height="152" viewBox="0 0 226 152"><defs><radialGradient id="sf"><stop offset="0" stop-color="#fff"/><stop offset=".1" stop-color="#e4e4e4"/><stop offset=".45" stop-color="#a4a4a4"/><stop offset=".8" stop-color="#6a6a6a" stop-opacity=".8"/><stop offset="1" stop-color="#4a4a4a" stop-opacity="0"/></radialGradient><filter id="bl"><feGaussianBlur stdDeviation=".7"/></filter><filter id="b3"><feGaussianBlur stdDeviation=".35"/></filter><linearGradient id="fg"><stop offset="0" stop-color="#8a8a8a"/><stop offset=".5" stop-color="#b8b8b8"/><stop offset="1" stop-color="#7e7e7e"/></linearGradient></defs>
<g transform="translate(0,0)"><circle cx="16.5" cy="9.5" r="9" fill="url(#sf)"/></g>
<g transform="translate(32,0)"><circle cx="16.3" cy="9.5" r="8.4" fill="#fff" filter="url(#b3)"/></g>
<g transform="translate(64,0)"><circle cx="16.3" cy="9.5" r="8.4" fill="#fff" filter="url(#b3)"/></g>
<g transform="translate(96,0)"><path d="M12.6 7.2 H18 L23.4 9.6 L18 12 H12.6Z" fill="#d6d6d6"/><path d="M8.8 7.4 V11.8 M10.6 7.4 V11.8" stroke="#a8a8a8" stroke-width="1.1"/></g>
<g transform="translate(128,0)"><rect x="14.6" y="6.4" width="8" height="6.8" fill="#d2d2d2"/><path d="M15 8.6 H22 M15 10.8 H22" stroke="#aaa" stroke-width=".6"/><rect x="8" y="6" width="5.4" height="7.6" fill="url(#fg)"/></g>
<g transform="translate(160,0)"><path d="M14.6 6.4 H20 Q22.8 6.4 22.8 9.8 Q22.8 13.2 20 13.2 H14.6Z" fill="#d2d2d2"/><rect x="8" y="6" width="5.4" height="7.6" fill="url(#fg)"/></g>
<g transform="translate(192,0)"><path d="M14.6 6.4 H24 L21 13.2 H14.6Z" fill="#d2d2d2"/><rect x="8" y="6" width="5.4" height="7.6" fill="url(#fg)"/></g>
<g transform="translate(0,32)"><path d="M14.4 8 L20 3.4 Q24.4 9.8 20.6 16 L14.4 12.4Z" fill="#d4d4d4"/><path d="M15 10 L21 5.5 M15 10.2 L22.2 9.8 M15 10.4 L21 14" stroke="#999" stroke-width=".6"/><rect x="8" y="7.7" width="6.2" height="4.8" fill="url(#fg)"/></g>
<g transform="translate(32,32)"><path d="M12.4 6.5 H19 L22.7 9.5 L19 12.5 H12.4Z" fill="#2c2c2c" stroke="#1c1c1c" stroke-width=".8"/><path d="M13 8.5 H19.5 M13 10.5 H19.5" stroke="#555" stroke-width=".6"/><rect x="7.7" y="6.5" width="4.4" height="6" fill="#ececec"/></g>
<g transform="translate(64,32)"><rect x="13.2" y="6.5" width="8.4" height="6.4" fill="#2c2c2c" stroke="#1c1c1c" stroke-width=".8"/><path d="M14 8.5 H21 M14 10.6 H21" stroke="#555" stroke-width=".6"/><rect x="7.8" y="6.5" width="5.1" height="6.4" fill="#ececec"/></g>
<g transform="translate(96,32)"><path d="M13.2 6.5 H19 Q22 6.5 22 9.7 Q22 12.9 19 12.9 H13.2Z" fill="#2c2c2c" stroke="#1c1c1c" stroke-width=".8"/><path d="M14 8.5 H21 M14 10.6 H21" stroke="#555" stroke-width=".6"/><rect x="7.8" y="6.5" width="5.1" height="6.4" fill="#ececec"/></g>
<g transform="translate(128,32)"><path d="M13.4 6.5 H23.4 L20.4 12.9 H13.4Z" fill="#2c2c2c" stroke="#1c1c1c" stroke-width=".8"/><rect x="7.8" y="6.5" width="5.1" height="6.4" fill="#ececec"/></g>
<g transform="translate(160,32)"><path d="M15.7 8.3 L18.6 3.5 Q24.2 10 19 16.7 L15.7 12.5Z" fill="#3c3c3c" stroke="#222" stroke-width=".8"/><rect x="7.9" y="8.3" width="7.8" height="4.2" fill="#e8e8e8"/></g>
<g transform="translate(192,32)"><path d="M13.4 6.5 H23.4 L20.4 12.9 H13.4Z" fill="#2c2c2c" stroke="#1c1c1c" stroke-width=".8"/><rect x="7.8" y="6.5" width="5.1" height="6.4" fill="#ececec"/></g>
<g transform="translate(0,64)"><rect x="8" y="6.6" width="8.4" height="5.4" fill="#bdbdbd"/><path d="M16.4 6 L21.6 9.3 L16.4 12.6Z" fill="#e4e4e4"/><rect x="21.4" y="8.8" width="2.2" height="1" fill="#9a9a9a"/><rect x="8" y="12" width="9" height="1" fill="#222" opacity=".6"/></g>
<g transform="translate(32,64)"><rect x="8" y="6.6" width="8.4" height="5.4" fill="#bdbdbd"/><path d="M16.4 6 L21.6 9.3 L16.4 12.6Z" fill="#e4e4e4"/><rect x="21.4" y="8.8" width="2.2" height="1" fill="#9a9a9a"/><rect x="8" y="12" width="9" height="1" fill="#222" opacity=".6"/></g>
<g transform="translate(64,64)"><rect x="8" y="8.6" width="8.6" height="3.6" fill="#d6d6d6"/><path d="M8 10.4 H16.6" stroke="#999" stroke-width=".6"/><path d="M16.6 8.2 L21.4 10.4 L16.6 12.6Z" fill="#ececec"/><rect x="10" y="4.6" width="5.4" height="1" fill="#bdbdbd"/><rect x="11.6" y="6.6" width="2.4" height="1" fill="#bdbdbd"/></g>
<g transform="translate(96,64)"><rect x="8" y="8.6" width="8.6" height="3.6" fill="#d6d6d6"/><path d="M8 10.4 H16.6" stroke="#999" stroke-width=".6"/><path d="M16.6 8.2 L21.4 10.4 L16.6 12.6Z" fill="#ececec"/><rect x="10" y="4.6" width="5.4" height="1" fill="#bdbdbd"/><rect x="11.6" y="6.6" width="2.4" height="1" fill="#bdbdbd"/></g>
<g transform="translate(128,64)"><rect x="8" y="8.6" width="8.6" height="3.6" fill="#d6d6d6"/><path d="M8 10.4 H16.6" stroke="#999" stroke-width=".6"/><path d="M16.6 8.2 L21.4 10.4 L16.6 12.6Z" fill="#ececec"/><rect x="10" y="4.6" width="5.4" height="1" fill="#bdbdbd"/><rect x="11.6" y="6.6" width="2.4" height="1" fill="#bdbdbd"/></g>
<g transform="translate(160,64)"><rect x="8" y="8.6" width="8.6" height="3.6" fill="#d6d6d6"/><path d="M8 10.4 H16.6" stroke="#999" stroke-width=".6"/><path d="M16.6 8.2 L21.4 10.4 L16.6 12.6Z" fill="#ececec"/><rect x="10" y="4.6" width="5.4" height="1" fill="#bdbdbd"/><rect x="11.6" y="6.6" width="2.4" height="1" fill="#bdbdbd"/></g>
<g transform="translate(192,64)"><rect x="8" y="8.6" width="8.6" height="3.6" fill="#d6d6d6"/><path d="M8 10.4 H16.6" stroke="#999" stroke-width=".6"/><path d="M16.6 8.2 L21.4 10.4 L16.6 12.6Z" fill="#ececec"/><rect x="10" y="4.6" width="5.4" height="1" fill="#bdbdbd"/><rect x="11.6" y="6.6" width="2.4" height="1" fill="#bdbdbd"/></g>
<g transform="translate(0,96)"><rect x="8" y="8.6" width="8.6" height="3.6" fill="#d6d6d6"/><path d="M8 10.4 H16.6" stroke="#999" stroke-width=".6"/><path d="M16.6 8.2 L21.4 10.4 L16.6 12.6Z" fill="#ececec"/><rect x="10" y="4.6" width="5.4" height="1" fill="#bdbdbd"/><rect x="11.6" y="6.6" width="2.4" height="1" fill="#bdbdbd"/></g>
<g transform="translate(32,96)"><rect x="8" y="8.6" width="8.6" height="3.6" fill="#d6d6d6"/><path d="M8 10.4 H16.6" stroke="#999" stroke-width=".6"/><path d="M16.6 8.2 L21.4 10.4 L16.6 12.6Z" fill="#ececec"/><rect x="10" y="4.6" width="5.4" height="1" fill="#bdbdbd"/><rect x="11.6" y="6.6" width="2.4" height="1" fill="#bdbdbd"/></g>
<g transform="translate(64,96)"><rect x="13.2" y="6.5" width="8.4" height="6.4" fill="#2c2c2c" stroke="#1c1c1c" stroke-width=".8"/><path d="M14 8.5 H21 M14 10.6 H21" stroke="#555" stroke-width=".6"/><rect x="7.8" y="6.5" width="5.1" height="6.4" fill="#ececec"/></g>
<g transform="translate(96,96)"><rect x="8" y="8.6" width="8.6" height="3.6" fill="#d6d6d6"/><path d="M8 10.4 H16.6" stroke="#999" stroke-width=".6"/><path d="M16.6 8.2 L21.4 10.4 L16.6 12.6Z" fill="#ececec"/><rect x="10" y="4.6" width="5.4" height="1" fill="#bdbdbd"/><rect x="11.6" y="6.6" width="2.4" height="1" fill="#bdbdbd"/></g>
<g transform="translate(128,96)"><rect x="8" y="8.6" width="8.6" height="3.6" fill="#d6d6d6"/><path d="M8 10.4 H16.6" stroke="#999" stroke-width=".6"/><path d="M16.6 8.2 L21.4 10.4 L16.6 12.6Z" fill="#ececec"/><rect x="10" y="4.6" width="5.4" height="1" fill="#bdbdbd"/><rect x="11.6" y="6.6" width="2.4" height="1" fill="#bdbdbd"/></g>
<g transform="translate(160,96)"><rect x="8" y="6.6" width="8.4" height="5.4" fill="#bdbdbd"/><path d="M16.4 6 L21.6 9.3 L16.4 12.6Z" fill="#e4e4e4"/><rect x="21.4" y="8.8" width="2.2" height="1" fill="#9a9a9a"/><rect x="8" y="12" width="9" height="1" fill="#222" opacity=".6"/></g>
<g transform="translate(192,96)"><rect x="8" y="6.6" width="8.4" height="5.4" fill="#bdbdbd"/><path d="M16.4 6 L21.6 9.3 L16.4 12.6Z" fill="#e4e4e4"/><rect x="21.4" y="8.8" width="2.2" height="1" fill="#9a9a9a"/><rect x="8" y="12" width="9" height="1" fill="#222" opacity=".6"/></g>
<g transform="translate(0,128)"><rect x="8" y="6.6" width="8.4" height="5.4" fill="#bdbdbd"/><path d="M16.4 6 L21.6 9.3 L16.4 12.6Z" fill="#e4e4e4"/><rect x="21.4" y="8.8" width="2.2" height="1" fill="#9a9a9a"/><rect x="8" y="12" width="9" height="1" fill="#222" opacity=".6"/></g>
<g transform="translate(32,128)"><rect x="8" y="6.6" width="8.4" height="5.4" fill="#bdbdbd"/><path d="M16.4 6 L21.6 9.3 L16.4 12.6Z" fill="#e4e4e4"/><rect x="21.4" y="8.8" width="2.2" height="1" fill="#9a9a9a"/><rect x="8" y="12" width="9" height="1" fill="#222" opacity=".6"/></g>
<g transform="translate(64,128)"><rect x="8" y="6.6" width="8.4" height="5.4" fill="#bdbdbd"/><path d="M16.4 6 L21.6 9.3 L16.4 12.6Z" fill="#e4e4e4"/><rect x="21.4" y="8.8" width="2.2" height="1" fill="#9a9a9a"/><rect x="8" y="12" width="9" height="1" fill="#222" opacity=".6"/></g>
<g transform="translate(96,128)"><path d="M8 6 C12 5 14 8 17 8.4 S22 10 24 15 C19 15.5 18 12.6 15 12.4 S10 11 8 6Z" fill="#ececec" opacity=".9" filter="url(#bl)"/></g>
<g transform="translate(128,128)"><g fill="#d0d0d0"><circle cx="16.2" cy="12.8" r="0.5"/><circle cx="13.3" cy="8.1" r="0.3"/><circle cx="20.6" cy="10.3" r="0.4"/><circle cx="16.8" cy="17.2" r="0.5"/><circle cx="17.4" cy="7.9" r="0.6"/><circle cx="18.0" cy="12.5" r="0.7"/><circle cx="12.1" cy="9.5" r="0.6"/><circle cx="19.7" cy="11.5" r="0.6"/><circle cx="15.8" cy="10.5" r="0.7"/><circle cx="12.2" cy="10.6" r="0.7"/><circle cx="14.8" cy="5.2" r="0.5"/><circle cx="16.8" cy="7.7" r="0.8"/><circle cx="16.8" cy="9.3" r="0.4"/><circle cx="17.3" cy="15.6" r="0.5"/><circle cx="14.6" cy="8.7" r="0.6"/><circle cx="14.3" cy="11.3" r="0.6"/></g></g>
<g transform="translate(160,128)"><g fill="#d8d8d8"><circle cx="9.6" cy="6.7" r="0.9"/><circle cx="22.0" cy="7.4" r="1.1"/><circle cx="15.0" cy="8.4" r="1.0"/><circle cx="23.2" cy="8.6" r="0.8"/><circle cx="15.5" cy="8.0" r="1.0"/><circle cx="13.5" cy="8.9" r="0.4"/><circle cx="22.3" cy="2.8" r="0.5"/><circle cx="17.1" cy="7.1" r="0.5"/><circle cx="14.4" cy="14.9" r="1.0"/><circle cx="20.5" cy="11.1" r="0.4"/><circle cx="15.4" cy="7.4" r="1.0"/><circle cx="20.0" cy="9.6" r="1.1"/><circle cx="15.5" cy="11.1" r="0.8"/><circle cx="18.2" cy="10.4" r="0.7"/><circle cx="14.5" cy="8.9" r="0.4"/><circle cx="18.0" cy="8.1" r="1.1"/><circle cx="18.6" cy="8.2" r="0.7"/><circle cx="11.2" cy="9.5" r="0.8"/><circle cx="11.6" cy="8.5" r="1.1"/><circle cx="12.4" cy="9.9" r="0.9"/><circle cx="16.2" cy="12.5" r="1.1"/><circle cx="11.8" cy="9.5" r="0.4"/><circle cx="12.1" cy="12.0" r="0.4"/><circle cx="12.4" cy="7.2" r="0.4"/><circle cx="13.3" cy="7.6" r="0.9"/><circle cx="12.8" cy="13.8" r="0.9"/><circle cx="17.2" cy="10.1" r="0.9"/><circle cx="18.5" cy="9.5" r="0.7"/><circle cx="13.5" cy="8.6" r="0.7"/><circle cx="14.7" cy="12.7" r="0.8"/><circle cx="15.0" cy="12.8" r="0.9"/><circle cx="20.3" cy="10.7" r="0.9"/><circle cx="15.1" cy="12.0" r="1.0"/><circle cx="16.2" cy="11.9" r="0.7"/><circle cx="15.5" cy="8.7" r="0.6"/><circle cx="12.8" cy="14.9" r="0.7"/><circle cx="17.3" cy="8.6" r="0.6"/><circle cx="11.9" cy="4.9" r="0.7"/><circle cx="16.3" cy="11.5" r="0.8"/><circle cx="18.2" cy="15.1" r="1.0"/><circle cx="17.1" cy="12.2" r="1.0"/><circle cx="12.1" cy="5.8" r="0.6"/></g></g>
<g transform="translate(192,128)"><g fill="#d8d8d8"><circle cx="17.9" cy="11.8" r="1.0"/><circle cx="15.6" cy="12.7" r="0.7"/><circle cx="12.9" cy="11.5" r="1.0"/><circle cx="16.2" cy="10.2" r="1.1"/><circle cx="23.3" cy="4.0" r="0.7"/><circle cx="23.4" cy="7.9" r="0.6"/><circle cx="15.8" cy="4.3" r="0.9"/><circle cx="13.2" cy="9.7" r="0.6"/><circle cx="16.2" cy="11.1" r="0.8"/><circle cx="14.6" cy="15.3" r="0.4"/><circle cx="20.3" cy="7.4" r="1.0"/><circle cx="21.8" cy="6.1" r="0.8"/><circle cx="21.6" cy="10.4" r="0.5"/><circle cx="14.5" cy="14.2" r="0.8"/><circle cx="9.1" cy="13.7" r="0.8"/><circle cx="14.6" cy="11.9" r="1.0"/><circle cx="10.1" cy="10.7" r="0.6"/><circle cx="17.4" cy="13.5" r="1.0"/><circle cx="18.9" cy="14.7" r="1.0"/><circle cx="18.2" cy="4.8" r="0.4"/><circle cx="11.3" cy="5.7" r="0.4"/><circle cx="15.6" cy="12.4" r="0.8"/><circle cx="12.6" cy="11.6" r="0.9"/><circle cx="17.1" cy="10.0" r="0.5"/><circle cx="16.9" cy="10.8" r="1.1"/><circle cx="16.9" cy="9.0" r="0.8"/><circle cx="14.8" cy="12.4" r="0.6"/><circle cx="13.3" cy="6.8" r="0.7"/><circle cx="17.1" cy="12.5" r="0.5"/><circle cx="10.9" cy="8.4" r="0.7"/><circle cx="17.9" cy="10.9" r="0.7"/><circle cx="11.3" cy="6.8" r="0.7"/><circle cx="17.5" cy="6.0" r="0.7"/><circle cx="13.2" cy="12.5" r="0.9"/><circle cx="11.4" cy="12.2" r="0.7"/><circle cx="16.1" cy="13.7" r="0.9"/><circle cx="19.2" cy="11.4" r="0.7"/><circle cx="21.8" cy="5.2" r="0.7"/><circle cx="20.8" cy="6.8" r="0.6"/><circle cx="14.3" cy="10.3" r="1.0"/><circle cx="12.3" cy="4.7" r="1.0"/><circle cx="13.3" cy="5.8" r="0.8"/></g></g>
</svg>
<div class="t" style="left:0px;top:20px;width:33px;text-align:center;color:#fff;font-size:10px;letter-spacing:-0.3px">30</div>
<div class="t" style="left:32px;top:20px;width:33px;text-align:center;color:#fff;font-size:10px;letter-spacing:-0.3px">30</div>
<div class="t" style="left:64px;top:20px;width:33px;text-align:center;color:#fff;font-size:10px;letter-spacing:-0.3px">30</div>
<div class="t" style="left:96px;top:20px;width:33px;text-align:center;color:#fff;font-size:10px;letter-spacing:-0.3px">25</div>
<div class="t" style="left:128px;top:20px;width:33px;text-align:center;color:#fff;font-size:10px;letter-spacing:-0.3px">25</div>
<div class="t" style="left:160px;top:20px;width:33px;text-align:center;color:#fff;font-size:10px;letter-spacing:-0.3px">25</div>
<div class="t" style="left:192px;top:20px;width:33px;text-align:center;color:#fff;font-size:10px;letter-spacing:-0.3px">36</div>
<div class="t" style="left:0px;top:52px;width:33px;text-align:center;color:#fff;font-size:10px;letter-spacing:-0.3px">25</div>
<div class="t" style="left:32px;top:52px;width:33px;text-align:center;color:#fff;font-size:10px;letter-spacing:-0.3px">36</div>
<div class="t" style="left:64px;top:52px;width:33px;text-align:center;color:#fff;font-size:10px;letter-spacing:-0.3px">36</div>
<div class="t" style="left:96px;top:52px;width:33px;text-align:center;color:#fff;font-size:10px;letter-spacing:-0.3px">36</div>
<div class="t" style="left:128px;top:52px;width:33px;text-align:center;color:#fff;font-size:10px;letter-spacing:-0.3px">32</div>
<div class="t" style="left:160px;top:52px;width:33px;text-align:center;color:#fff;font-size:10px;letter-spacing:-0.3px">25</div>
<div class="t" style="left:192px;top:52px;width:33px;text-align:center;color:#fff;font-size:10px;letter-spacing:-0.3px">50</div>
<div class="t" style="left:0px;top:84px;width:33px;text-align:center;color:#fff;font-size:10px;letter-spacing:-0.3px">25</div>
<div class="t" style="left:32px;top:84px;width:33px;text-align:center;color:#fff;font-size:10px;letter-spacing:-0.3px">25</div>
<div class="t" style="left:64px;top:84px;width:33px;text-align:center;color:#fff;font-size:10px;letter-spacing:-0.3px">50</div>
<div class="t" style="left:96px;top:84px;width:33px;text-align:center;color:#fff;font-size:10px;letter-spacing:-0.3px">71</div>
<div class="t" style="left:128px;top:84px;width:33px;text-align:center;color:#fff;font-size:10px;letter-spacing:-0.3px">25</div>
<div class="t" style="left:160px;top:84px;width:33px;text-align:center;color:#fff;font-size:10px;letter-spacing:-0.3px">50</div>
<div class="t" style="left:192px;top:84px;width:33px;text-align:center;color:#fff;font-size:10px;letter-spacing:-0.3px">50</div>
<div class="t" style="left:0px;top:116px;width:33px;text-align:center;color:#fff;font-size:10px;letter-spacing:-0.3px">50</div>
<div class="t" style="left:32px;top:116px;width:33px;text-align:center;color:#fff;font-size:10px;letter-spacing:-0.3px">50</div>
<div class="t" style="left:64px;top:116px;width:33px;text-align:center;color:#fff;font-size:10px;letter-spacing:-0.3px">36</div>
<div class="t" style="left:96px;top:116px;width:33px;text-align:center;color:#fff;font-size:10px;letter-spacing:-0.3px">30</div>
<div class="t" style="left:128px;top:116px;width:33px;text-align:center;color:#fff;font-size:10px;letter-spacing:-0.3px">30</div>
<div class="t" style="left:160px;top:116px;width:33px;text-align:center;color:#fff;font-size:10px;letter-spacing:-0.3px">20</div>
<div class="t" style="left:192px;top:116px;width:33px;text-align:center;color:#fff;font-size:10px;letter-spacing:-0.3px">9</div>
<div class="t" style="left:0px;top:148px;width:33px;text-align:center;color:#fff;font-size:10px;letter-spacing:-0.3px">25</div>
<div class="t" style="left:32px;top:148px;width:33px;text-align:center;color:#fff;font-size:10px;letter-spacing:-0.3px">9</div>
<div class="t" style="left:64px;top:148px;width:33px;text-align:center;color:#fff;font-size:10px;letter-spacing:-0.3px">25</div>
<div class="t" style="left:96px;top:148px;width:33px;text-align:center;color:#fff;font-size:10px;letter-spacing:-0.3px">45</div>
<div class="t" style="left:128px;top:148px;width:33px;text-align:center;color:#fff;font-size:10px;letter-spacing:-0.3px">14</div>
<div class="t" style="left:160px;top:148px;width:33px;text-align:center;color:#fff;font-size:10px;letter-spacing:-0.3px">24</div>
<div class="t" style="left:192px;top:148px;width:33px;text-align:center;color:#fff;font-size:10px;letter-spacing:-0.3px">27</div>
<div class="a" style="left:32px;top:0px;width:33px;height:33px;border:1px solid #5b7fd0;border-top:0"></div>
<div class="a" style="left:239px;top:0;width:17px;height:152px;background:linear-gradient(90deg,#353535,#3f3f3f)"></div>
<div class="a" style="left:241px;top:19px;width:12px;height:30px;border-radius:3px;background:linear-gradient(90deg,#6a6a6a,#8a8a8a 50%,#6e6e6e)"></div>
<div class="a" style="left:243px;top:7px;border:4px solid transparent;border-bottom:4px solid #e6e6e6;border-top:0"></div>
<div class="a" style="left:243px;top:142px;border:4px solid transparent;border-top:4px solid #e6e6e6;border-bottom:0"></div>
</div>
<div class="t" style="left:1331px;top:303px;color:#f0f0f0">Taille</div>
<div class="fld" style="left:1532px;top:301px;width:55px"><div class="t" style="left:5px;top:2px">300 px</div></div>
<div class="a" style="left:1331px;top:328px;width:256px;height:5px;border-radius:2.5px;background:linear-gradient(#333,#414141);box-shadow:0 1px 0 #666"></div><svg class="a" style="left:1530px;top:330px" width="11" height="9" viewBox="0 0 11 9"><path d="M5.5 0.6 L10.2 5.2 V7.6 Q10.2 8.6 9.2 8.6 H1.8 Q0.8 8.6 0.8 7.6 V5.2Z" fill="#bdbdbd" stroke="#3a3a3a" stroke-width=".8"/></svg>
<div class="cb" style="left:1331px;top:347px"></div>
<div class="t" style="left:1350px;top:347px;color:#f0f0f0">Symétrie X</div>
<div class="cb" style="left:1403px;top:347px"></div>
<div class="t" style="left:1422px;top:347px;color:#f0f0f0">Symétrie Y</div>
<div class="t" style="left:1312px;width:100px;text-align:right;top:380px;color:#f0f0f0">Angle :</div>
<div class="fld" style="left:1420px;top:378px;width:50px"><div class="t" style="left:5px;top:2px">0°</div></div>
<div class="t" style="left:1312px;width:100px;text-align:right;top:408px;color:#f0f0f0">Arrondi :</div>
<div class="fld" style="left:1420px;top:406px;width:50px"><div class="t" style="left:5px;top:2px">100 %</div></div>
<div class="a" style="left:1491px;top:350px;width:73px;height:73px;background:#3a3a3a;border:1px solid #333;box-shadow:0 1px 0 #636363"></div>
<svg class="a" style="left:1497px;top:357px" width="60" height="60" viewBox="0 0 60 60"><circle cx="30" cy="30" r="25" fill="none" stroke="#7c7c7c" stroke-width="1.4"/><path d="M30 5 V55 M5 30 H55" stroke="#7c7c7c" stroke-width="1.2"/><circle cx="30" cy="5" r="2.2" fill="#e8e8e8"/><circle cx="30" cy="55" r="2.2" fill="#e8e8e8"/></svg>
<div class="t" style="left:1331px;top:432px;color:#f0f0f0">Dureté</div>
<div class="fld" style="left:1537px;top:430px;width:50px"><div class="t" style="left:5px;top:2px">100 %</div></div>
<div class="a" style="left:1331px;top:455px;width:256px;height:5px;border-radius:2.5px;background:linear-gradient(#333,#414141);box-shadow:0 1px 0 #666"></div><svg class="a" style="left:1581px;top:457px" width="11" height="9" viewBox="0 0 11 9"><path d="M5.5 0.6 L10.2 5.2 V7.6 Q10.2 8.6 9.2 8.6 H1.8 Q0.8 8.6 0.8 7.6 V5.2Z" fill="#bdbdbd" stroke="#3a3a3a" stroke-width=".8"/></svg>
<div class="cb" style="left:1331px;top:476px"></div><svg class="a" style="left:1331px;top:474px" width="15" height="15" viewBox="0 0 15 15"><path d="M3 7 L6 11.5 L13 1.5" fill="none" stroke="#ececec" stroke-width="1.5"/></svg>
<div class="t" style="left:1350px;top:476px;color:#f0f0f0">Pas</div>
<div class="fld" style="left:1537px;top:474px;width:50px"><div class="t" style="left:5px;top:2px">25 %</div></div>
<div class="a" style="left:1331px;top:499px;width:256px;height:5px;border-radius:2.5px;background:linear-gradient(#333,#414141);box-shadow:0 1px 0 #666"></div><svg class="a" style="left:1357px;top:501px" width="11" height="9" viewBox="0 0 11 9"><path d="M5.5 0.6 L10.2 5.2 V7.6 Q10.2 8.6 9.2 8.6 H1.8 Q0.8 8.6 0.8 7.6 V5.2Z" fill="#bdbdbd" stroke="#3a3a3a" stroke-width=".8"/></svg>
<div class="a" style="left:1143px;top:565px;width:446px;height:82px;background:#3a3a3a;border:1px solid #5c5c5c;box-shadow:0 0 0 1px #444"></div>
<svg class="a" style="left:1144px;top:566px" width="444" height="80" viewBox="1144 566 444 80"><path d="M1170.5 606 C1225 593 1285 588 1345 601 C1405 616 1465 626 1551.5 607" fill="none" stroke="#fff" stroke-width="47.5" stroke-linecap="round"/></svg>
<div class="a" style="left:1137px;top:653px;width:457px;height:2px;background:#3e3e3e;border-bottom:1px solid #626262"></div>
<div class="a" style="left:1137px;top:671px;width:457px;height:2px;background:#3a3a3a;border-bottom:1px solid #5e5e5e"></div>
<div class="a" style="left:1355px;top:675px;width:20px;height:4px;background:repeating-linear-gradient(90deg,#333 0 1px,transparent 1px 2px)"></div>
<svg class="a" style="left:1487px;top:657px" width="22" height="13" viewBox="0 0 22 13"><ellipse cx="7" cy="6" rx="5.4" ry="3.4" fill="none" stroke="#8a8a8a" stroke-width="1.3"/><circle cx="7" cy="6" r="1.5" fill="#8a8a8a"/><path d="M19.5 1 L20.5 2 L14 9.5 L12.8 8.5Z M12.2 9 L13.6 10.2 C12.8 11.6 11 12 9 11.6 C10.6 11 11 9.6 12.2 9Z" fill="#8a8a8a"/></svg>
<svg class="a" style="left:1523px;top:657px" width="14" height="12" viewBox="0 0 14 12"><rect x="0.5" y="0.5" width="13" height="11" fill="#dcdcdc"/><path d="M2 3 H4 M5 3 H7 M8 3 H10 M2 5.5 H4 M5 5.5 H7 M8 5.5 H10 M11 3 H12 M3 8.5 H9 M10.5 8.5 H12" stroke="#333" stroke-width="1.4"/></svg>
<svg class="a" style="left:1552px;top:657px" width="13" height="12" viewBox="0 0 13 12"><path d="M1 0.5 H12.5 V11.5 H5 V7.5 H1Z" fill="#dcdcdc"/><path d="M1 8.5 H4 V11.5Z" fill="#dcdcdc"/></svg>
<svg class="a" style="left:1583px;top:661px" width="10" height="10" viewBox="0 0 10 10"><rect x="8" y="0" width="1" height="1" fill="#2e2e2e"/><rect x="6" y="2" width="1" height="1" fill="#2e2e2e"/><rect x="8" y="2" width="1" height="1" fill="#2e2e2e"/><rect x="4" y="4" width="1" height="1" fill="#2e2e2e"/><rect x="6" y="4" width="1" height="1" fill="#2e2e2e"/><rect x="8" y="4" width="1" height="1" fill="#2e2e2e"/><rect x="2" y="6" width="1" height="1" fill="#2e2e2e"/><rect x="4" y="6" width="1" height="1" fill="#2e2e2e"/><rect x="6" y="6" width="1" height="1" fill="#2e2e2e"/><rect x="8" y="6" width="1" height="1" fill="#2e2e2e"/><rect x="0" y="8" width="1" height="1" fill="#2e2e2e"/><rect x="2" y="8" width="1" height="1" fill="#2e2e2e"/><rect x="4" y="8" width="1" height="1" fill="#2e2e2e"/><rect x="6" y="8" width="1" height="1" fill="#2e2e2e"/><rect x="8" y="8" width="1" height="1" fill="#2e2e2e"/></svg>
<!-- BRUSH_END -->
<!-- DOCK -->
<div class="a" style="left:1596px;top:63px;width:324px;height:978px;background:#2b2b2b"></div>
<div class="a" style="left:1596px;top:64px;width:323px;height:10px;background:linear-gradient(#383838,#323232)"></div>
<svg class="a" style="left:1621px;top:65px" width="9" height="7" viewBox="0 0 9 7"><path d="M4 0.3 V6.7 L0.4 3.5Z M8.4 0.3 V6.7 L4.8 3.5Z" fill="#dcdcdc"/></svg>
<svg class="a" style="left:1907px;top:65px" width="9" height="7" viewBox="0 0 9 7"><path d="M0.6 0.3 V6.7 L4.2 3.5Z M5 0.3 V6.7 L8.6 3.5Z" fill="#dcdcdc"/></svg>
<div class="a" style="left:1596px;top:75px;width:37px;height:40px;background:#535353;border-top:1px solid #666"></div>
<div class="a" style="left:1596px;top:116px;width:37px;height:96px;background:#535353;border-top:1px solid #666"></div>
<div class="a" style="left:1596px;top:213px;width:37px;height:828px;background:#535353;border-top:1px solid #666"></div>
<div class="a" style="left:1605px;top:78px;width:20px;height:4px;background:repeating-linear-gradient(90deg,#333 0 1px,transparent 1px 2px)"></div>
<div class="a" style="left:1605px;top:119px;width:20px;height:4px;background:repeating-linear-gradient(90deg,#333 0 1px,transparent 1px 2px)"></div>
<svg class="a" style="left:1606px;top:89px" width="19" height="19" viewBox="0 0 19 19"><defs><linearGradient id="ig" x2="0" y2="1"><stop offset="0" stop-color="#e4e4e4"/><stop offset="1" stop-color="#b4b4b4"/></linearGradient></defs><circle cx="9.5" cy="9.5" r="8.6" fill="url(#ig)"/><circle cx="9.5" cy="4.8" r="1.5" fill="#444"/><rect x="8.1" y="7.6" width="2.8" height="6.6" fill="#444"/></svg>
<svg class="a" style="left:1607px;top:130px" width="17" height="18" viewBox="0 0 17 18"><path d="M5.5 0.8 L10 3 V8.4 L5.5 10.8 L1 8.4 V3Z" fill="#d8d8d8"/><path d="M1 3 L5.5 5.4 L10 3 M5.5 5.4 V10.8" fill="none" stroke="#666" stroke-width="1"/><rect x="12" y="1" width="4.4" height="3.6" fill="#d8d8d8"/><rect x="12" y="6" width="4.4" height="3.6" fill="#d8d8d8"/><rect x="1" y="13" width="15.4" height="3.6" fill="#d8d8d8"/><path d="M12 14 H15.4 L13.7 16Z" fill="#222"/></svg>
<div class="a" style="left:1600px;top:155px;width:29px;height:24px;background:#3a3a3a;border-radius:3px;box-shadow:inset 0 1px 1px #2a2a2a,0 1px 0 #616161"></div>
<svg class="a" style="left:1605px;top:157px" width="20" height="20" viewBox="0 0 20 20"><rect x="6" y="10.5" width="8" height="8.5" fill="#d0d0d0"/><path d="M3 1.5 C1.5 4 3 7 6.5 10 L8 9 C6 6 5 3.5 3 1.5Z M9.5 1 C8.6 1 8.4 3 8.8 5 L9.4 10 H10.6 L11 5 C11.4 3 11 1 9.5 1Z M12 9.6 L14 5.6 C15 4 17.4 3.4 18 5.4 C16 5.4 15 6.6 13.4 10Z" fill="#e0e0e0"/></svg>
<svg class="a" style="left:1605px;top:186px" width="21" height="19" viewBox="0 0 21 19"><path d="M0.5 2 C3 0.6 6 0.6 8.4 2.2 L8.4 4.6 C6 6.4 3 5.4 0.5 2Z" fill="#dcdcdc"/><rect x="8.4" y="2.6" width="12" height="1.8" fill="#dcdcdc"/><rect x="0.8" y="11" width="11" height="1.8" fill="#dcdcdc"/><path d="M11 11 L17 6.6 C20.4 8.6 20.4 14.4 17.6 17.4 L11 12.8Z" fill="#d0d0d0"/></svg>
<div class="a" style="left:1636px;top:75px;width:283px;height:320px;background:#535353"></div>
<div class="a" style="left:1636px;top:75px;width:283px;height:17px;background:#3a3a3a;border-bottom:1px solid #2f2f2f"></div>
<div class="a" style="left:1636px;top:75px;width:65px;height:18px;background:#535353;border-right:1px solid #2f2f2f;border-top:1px solid #6a6a6a"></div>
<div class="t b" style="left:1643px;top:77px;color:#f4f4f4;letter-spacing:0.1px">Navigation</div>
<div class="a" style="left:1702px;top:75px;width:77px;height:16px;background:#424242;border-right:1px solid #2f2f2f"></div>
<div class="t b" style="left:1708px;top:77px;color:#a2a2a2;letter-spacing:0.1px">Histogramme</div>
<div class="a" style="left:1636px;top:92px;width:283px;height:1px;background:#6a6a6a"></div><div class="a" style="left:1636px;top:92px;width:65px;height:1px;background:#535353"></div>
<svg class="a" style="left:1901px;top:80px" width="16" height="8" viewBox="0 0 16 8"><path d="M0.5 1.5 H5.5 L3 4.5Z" fill="#d0d0d0"/><path d="M6.5 0.5 H15 M6.5 2.5 H15 M6.5 4.5 H15 M6.5 6.5 H15" stroke="#dcdcdc" stroke-width="1"/></svg>
<div class="a" style="left:1681px;top:98px;width:193px;height:273px;background:#fff;border:2px solid #ff4343;box-shadow:-1px -1px 0 #3a3a3a,1px 1px 0 #7e8688"></div>
<!-- NAVBLOB --><svg class="a" style="left:1683px;top:100px" width="189" height="269" viewBox="479 114 620 877" preserveAspectRatio="none"><use href="#blob"/></svg>
<div class="a" style="left:1636px;top:377px;width:283px;height:1px;background:#3e3e3e"></div><div class="a" style="left:1636px;top:378px;width:283px;height:1px;background:#626262"></div>
<div class="a" style="left:1636px;top:379px;width:57px;height:16px;background:#3a3a3a"></div>
<div class="t" style="left:1640px;top:380px;color:#f0f0f0">25 %</div>
<div class="a" style="left:1693px;top:379px;width:1px;height:16px;background:#3e3e3e"></div>
<svg class="a" style="left:1699px;top:384px" width="11" height="7" viewBox="0 0 11 7"><path d="M0.5 6 L3.8 2.4 L5 3.8 L6.6 1 L10.5 6Z" fill="#9a9a9a" stroke="#e8e8e8" stroke-width="1"/></svg>
<div class="a" style="left:1722px;top:383px;width:149px;height:5px;border-radius:2.5px;background:linear-gradient(#333,#414141);box-shadow:0 1px 0 #666"></div>
<svg class="a" style="left:1776px;top:384px" width="11" height="9" viewBox="0 0 11 9"><path d="M5.5 0.6 L10.2 5.2 V7.6 Q10.2 8.6 9.2 8.6 H1.8 Q0.8 8.6 0.8 7.6 V5.2Z" fill="#bdbdbd" stroke="#3a3a3a" stroke-width=".8"/></svg>
<svg class="a" style="left:1878px;top:380px" width="19" height="10" viewBox="0 0 19 10"><path d="M0.5 9.5 L6 2 L9 6 L12.5 0.8 L18.5 9.5Z" fill="none" stroke="#d0d0d0" stroke-width="1.1"/><path d="M0.5 9.5 L6 2 L9 6 L12.5 0.8 L18.5 9.5Z" fill="#d0d0d0" opacity=".55"/></svg>
<svg class="a" style="left:1907px;top:384px" width="10" height="10" viewBox="0 0 10 10"><rect x="8" y="0" width="1" height="1" fill="#2e2e2e"/><rect x="6" y="2" width="1" height="1" fill="#2e2e2e"/><rect x="8" y="2" width="1" height="1" fill="#2e2e2e"/><rect x="4" y="4" width="1" height="1" fill="#2e2e2e"/><rect x="6" y="4" width="1" height="1" fill="#2e2e2e"/><rect x="8" y="4" width="1" height="1" fill="#2e2e2e"/><rect x="2" y="6" width="1" height="1" fill="#2e2e2e"/><rect x="4" y="6" width="1" height="1" fill="#2e2e2e"/><rect x="6" y="6" width="1" height="1" fill="#2e2e2e"/><rect x="8" y="6" width="1" height="1" fill="#2e2e2e"/><rect x="0" y="8" width="1" height="1" fill="#2e2e2e"/><rect x="2" y="8" width="1" height="1" fill="#2e2e2e"/><rect x="4" y="8" width="1" height="1" fill="#2e2e2e"/><rect x="6" y="8" width="1" height="1" fill="#2e2e2e"/><rect x="8" y="8" width="1" height="1" fill="#2e2e2e"/></svg>
<div class="a" style="left:1636px;top:398px;width:283px;height:320px;background:#535353"></div>
<div class="a" style="left:1636px;top:398px;width:283px;height:17px;background:#3a3a3a;border-bottom:1px solid #2f2f2f"></div>
<div class="a" style="left:1636px;top:398px;width:64px;height:18px;background:#535353;border-right:1px solid #2f2f2f;border-top:1px solid #6a6a6a"></div>
<div class="t b" style="left:1643px;top:400px;color:#f4f4f4;letter-spacing:0.05px">Historique</div>
<div class="a" style="left:1701px;top:398px;width:49px;height:16px;background:#424242;border-right:1px solid #2f2f2f"></div>
<div class="t b" style="left:1707px;top:400px;color:#a2a2a2;letter-spacing:0.05px">Actions</div>
<div class="a" style="left:1636px;top:415px;width:283px;height:1px;background:#6a6a6a"></div><div class="a" style="left:1636px;top:415px;width:64px;height:1px;background:#535353"></div>
<svg class="a" style="left:1901px;top:403px" width="16" height="8" viewBox="0 0 16 8"><path d="M0.5 1.5 H5.5 L3 4.5Z" fill="#d0d0d0"/><path d="M6.5 0.5 H15 M6.5 2.5 H15 M6.5 4.5 H15 M6.5 6.5 H15" stroke="#dcdcdc" stroke-width="1"/></svg>
<div class="a" style="left:1636px;top:416px;width:267px;height:283px;overflow:hidden"><div class="a" style="left:0;top:1px;width:268px;height:300px">
<svg class="a" style="left:30px;top:-9px" width="20" height="17" viewBox="0 0 20 17"><path d="M18.2 0.2 L19.9 1.4 L12 12.6 L9.4 10.6Z" fill="#d8d8d8"/><path d="M8.6 10.4 L11.8 12.9 C11.4 15.8 6.6 17 0.8 14.8 C4.4 14.4 5.6 11.8 8.6 10.4Z" fill="#d8d8d8"/></svg>
<div class="a" style="left:6px;top:-6px;width:12px;height:7px;border:1px solid #6c6c6c;border-left-color:#3c3c3c;border-top:0"></div>
<div class="a" style="left:0;top:6px;width:268px;height:1px;background:#3e3e3e"></div>
<div class="a" style="left:6px;top:12px;width:12px;height:12px;border:1px solid #3c3c3c;border-right-color:#6c6c6c;border-bottom-color:#6c6c6c"></div>
<svg class="a" style="left:29px;top:10px" width="20" height="17" viewBox="0 0 20 17"><path d="M18.2 0.2 L19.9 1.4 L12 12.6 L9.4 10.6Z" fill="#dcdcdc"/><path d="M8.6 10.4 L11.8 12.9 C11.4 15.8 6.6 17 0.8 14.8 C4.4 14.4 5.6 11.8 8.6 10.4Z" fill="#dcdcdc"/></svg>
<div class="t" style="left:59px;top:11px;color:#fff">Pinceau</div>
<div class="a" style="left:0;top:29px;width:268px;height:1px;background:#3e3e3e"></div>
<div class="a" style="left:6px;top:35px;width:12px;height:12px;border:1px solid #3c3c3c;border-right-color:#6c6c6c;border-bottom-color:#6c6c6c"></div>
<svg class="a" style="left:29px;top:33px" width="20" height="17" viewBox="0 0 20 17"><path d="M18.2 0.2 L19.9 1.4 L12 12.6 L9.4 10.6Z" fill="#dcdcdc"/><path d="M8.6 10.4 L11.8 12.9 C11.4 15.8 6.6 17 0.8 14.8 C4.4 14.4 5.6 11.8 8.6 10.4Z" fill="#dcdcdc"/></svg>
<div class="t" style="left:59px;top:34px;color:#fff">Pinceau</div>
<div class="a" style="left:0;top:52px;width:268px;height:1px;background:#3e3e3e"></div>
<div class="a" style="left:6px;top:58px;width:12px;height:12px;border:1px solid #3c3c3c;border-right-color:#6c6c6c;border-bottom-color:#6c6c6c"></div>
<svg class="a" style="left:29px;top:56px" width="20" height="17" viewBox="0 0 20 17"><path d="M18.2 0.2 L19.9 1.4 L12 12.6 L9.4 10.6Z" fill="#dcdcdc"/><path d="M8.6 10.4 L11.8 12.9 C11.4 15.8 6.6 17 0.8 14.8 C4.4 14.4 5.6 11.8 8.6 10.4Z" fill="#dcdcdc"/></svg>
<div class="t" style="left:59px;top:57px;color:#fff">Pinceau</div>
<div class="a" style="left:0;top:75px;width:268px;height:1px;background:#3e3e3e"></div>
<div class="a" style="left:6px;top:81px;width:12px;height:12px;border:1px solid #3c3c3c;border-right-color:#6c6c6c;border-bottom-color:#6c6c6c"></div>
<svg class="a" style="left:29px;top:79px" width="20" height="17" viewBox="0 0 20 17"><path d="M18.2 0.2 L19.9 1.4 L12 12.6 L9.4 10.6Z" fill="#dcdcdc"/><path d="M8.6 10.4 L11.8 12.9 C11.4 15.8 6.6 17 0.8 14.8 C4.4 14.4 5.6 11.8 8.6 10.4Z" fill="#dcdcdc"/></svg>
<div class="t" style="left:59px;top:80px;color:#fff">Pinceau</div>
<div class="a" style="left:0;top:98px;width:268px;height:1px;background:#3e3e3e"></div>
<div class="a" style="left:6px;top:104px;width:12px;height:12px;border:1px solid #3c3c3c;border-right-color:#6c6c6c;border-bottom-color:#6c6c6c"></div>
<svg class="a" style="left:29px;top:102px" width="20" height="17" viewBox="0 0 20 17"><path d="M18.2 0.2 L19.9 1.4 L12 12.6 L9.4 10.6Z" fill="#dcdcdc"/><path d="M8.6 10.4 L11.8 12.9 C11.4 15.8 6.6 17 0.8 14.8 C4.4 14.4 5.6 11.8 8.6 10.4Z" fill="#dcdcdc"/></svg>
<div class="t" style="left:59px;top:103px;color:#fff">Pinceau</div>
<div class="a" style="left:0;top:123px;width:268px;height:22px;background:#6b7d99"></div>
<div class="a" style="left:0;top:121px;width:268px;height:1px;background:#3e3e3e"></div>
<div class="a" style="left:6px;top:127px;width:12px;height:12px;border:1px solid #3c3c3c;border-right-color:#8496b1;border-bottom-color:#8496b1"></div>
<svg class="a" style="left:31px;top:126px" width="18" height="15" viewBox="0 0 18 15"><path d="M5.6 1.8 L16.6 0.8 L17 4.6 L11.6 10 L11.4 13.2 L0.8 14.2 L0.8 10.4Z" fill="#dcdcdc"/><path d="M0.9 10.3 L11.6 9.4 L16.9 4.4 M11.6 9.4 L11.4 13" fill="none" stroke="#777" stroke-width="0.9"/></svg>
<div class="t" style="left:59px;top:126px;color:#fff">Gomme</div>
<div class="a" style="left:0;top:144px;width:268px;height:1px;background:#3e3e3e"></div>
<div class="a" style="left:6px;top:150px;width:12px;height:12px;border:1px solid #3c3c3c;border-right-color:#6c6c6c;border-bottom-color:#6c6c6c"></div>
<svg class="a" style="left:31px;top:149px" width="18" height="15" viewBox="0 0 18 15"><path d="M5.6 1.8 L16.6 0.8 L17 4.6 L11.6 10 L11.4 13.2 L0.8 14.2 L0.8 10.4Z" fill="#868686"/><path d="M0.9 10.3 L11.6 9.4 L16.9 4.4 M11.6 9.4 L11.4 13" fill="none" stroke="#5a5a5a" stroke-width="0.9"/></svg>
<div class="t" style="left:59px;top:149px;color:#7c7c7c;font-style:italic;-webkit-text-stroke:0">Gomme</div>
<div class="a" style="left:0;top:167px;width:268px;height:1px;background:#3e3e3e"></div>
<div class="a" style="left:6px;top:173px;width:12px;height:12px;border:1px solid #3c3c3c;border-right-color:#6c6c6c;border-bottom-color:#6c6c6c"></div>
<svg class="a" style="left:31px;top:172px" width="18" height="15" viewBox="0 0 18 15"><path d="M5.6 1.8 L16.6 0.8 L17 4.6 L11.6 10 L11.4 13.2 L0.8 14.2 L0.8 10.4Z" fill="#868686"/><path d="M0.9 10.3 L11.6 9.4 L16.9 4.4 M11.6 9.4 L11.4 13" fill="none" stroke="#5a5a5a" stroke-width="0.9"/></svg>
<div class="t" style="left:59px;top:172px;color:#7c7c7c;font-style:italic;-webkit-text-stroke:0">Gomme</div>
<div class="a" style="left:0;top:190px;width:268px;height:1px;background:#3e3e3e"></div>
<div class="a" style="left:6px;top:196px;width:12px;height:12px;border:1px solid #3c3c3c;border-right-color:#6c6c6c;border-bottom-color:#6c6c6c"></div>
<svg class="a" style="left:29px;top:194px" width="20" height="17" viewBox="0 0 20 17"><path d="M18.2 0.2 L19.9 1.4 L12 12.6 L9.4 10.6Z" fill="#7e7e7e"/><path d="M8.6 10.4 L11.8 12.9 C11.4 15.8 6.6 17 0.8 14.8 C4.4 14.4 5.6 11.8 8.6 10.4Z" fill="#7e7e7e"/></svg>
<div class="t" style="left:59px;top:195px;color:#7c7c7c;font-style:italic;-webkit-text-stroke:0">Pinceau</div>
<div class="a" style="left:0;top:213px;width:268px;height:1px;background:#3e3e3e"></div>
<div class="a" style="left:6px;top:219px;width:12px;height:12px;border:1px solid #3c3c3c;border-right-color:#6c6c6c;border-bottom-color:#6c6c6c"></div>
<svg class="a" style="left:29px;top:217px" width="20" height="17" viewBox="0 0 20 17"><path d="M18.2 0.2 L19.9 1.4 L12 12.6 L9.4 10.6Z" fill="#7e7e7e"/><path d="M8.6 10.4 L11.8 12.9 C11.4 15.8 6.6 17 0.8 14.8 C4.4 14.4 5.6 11.8 8.6 10.4Z" fill="#7e7e7e"/></svg>
<div class="t" style="left:59px;top:218px;color:#7c7c7c;font-style:italic;-webkit-text-stroke:0">Pinceau</div>
<div class="a" style="left:0;top:236px;width:268px;height:1px;background:#3e3e3e"></div>
<div class="a" style="left:6px;top:242px;width:12px;height:12px;border:1px solid #3c3c3c;border-right-color:#6c6c6c;border-bottom-color:#6c6c6c"></div>
<svg class="a" style="left:29px;top:240px" width="20" height="17" viewBox="0 0 20 17"><path d="M18.2 0.2 L19.9 1.4 L12 12.6 L9.4 10.6Z" fill="#7e7e7e"/><path d="M8.6 10.4 L11.8 12.9 C11.4 15.8 6.6 17 0.8 14.8 C4.4 14.4 5.6 11.8 8.6 10.4Z" fill="#7e7e7e"/></svg>
<div class="t" style="left:59px;top:241px;color:#7c7c7c;font-style:italic;-webkit-text-stroke:0">Pinceau</div>
<div class="a" style="left:0;top:259px;width:268px;height:1px;background:#3e3e3e"></div>
<div class="a" style="left:6px;top:265px;width:12px;height:12px;border:1px solid #3c3c3c;border-right-color:#6c6c6c;border-bottom-color:#6c6c6c"></div>
<svg class="a" style="left:32px;top:264px" width="15" height="16" viewBox="0 0 15 16"><path d="M1 0.8 H11 L14 3.8 V15.2 H1Z" fill="none" stroke="#8a8a8a" stroke-width="1.1"/><path d="M3 5.5 H12 M3 7.5 H12 M3 9.5 H12 M3 11.5 H12 M3 13.5 H12" stroke="#8a8a8a" stroke-width=".8"/></svg>
<div class="t" style="left:59px;top:264px;color:#7c7c7c;font-style:italic;-webkit-text-stroke:0">Dupliquer sur le calque inférieur</div>
</div></div>
<div class="a" style="left:1903px;top:416px;width:16px;height:283px;background:linear-gradient(90deg,#353535,#454545 50%,#3c3c3c)"></div>
<div class="a" style="left:1905px;top:566px;width:12px;height:115px;border-radius:3px;background:linear-gradient(90deg,#6a6a6a,#8c8c8c 50%,#707070)"></div>
<div class="a" style="left:1907.5px;top:422px;border:3.5px solid transparent;border-bottom:4px solid #e6e6e6;border-top:0"></div>
<div class="a" style="left:1907.5px;top:690px;border:3.5px solid transparent;border-top:4px solid #e6e6e6;border-bottom:0"></div>
<div class="a" style="left:1636px;top:699px;width:283px;height:1px;background:#3e3e3e"></div><div class="a" style="left:1636px;top:700px;width:283px;height:1px;background:#626262"></div>
<svg class="a" style="left:1817px;top:703px" width="15" height="14" viewBox="0 0 15 14"><path d="M5 0.6 H11 L14.4 4 V13.4 H5 V9.6 H7.8 V5.4 H5Z" fill="#dcdcdc"/><path d="M10.6 0.8 V4.4 H14.2" fill="none" stroke="#555" stroke-width="1"/><path d="M0.5 7.5 H6.5 M3.5 4.5 V10.5" stroke="#f0f0f0" stroke-width="1.8"/></svg>
<svg class="a" style="left:1848px;top:704px" width="15" height="12" viewBox="0 0 15 12"><path d="M0.5 2.5 H4 L5 0.6 H10 L11 2.5 H14.5 V11.5 H0.5Z" fill="#dcdcdc"/><circle cx="7.5" cy="7" r="3.1" fill="#444"/><circle cx="7.5" cy="7" r="1.7" fill="#dcdcdc"/></svg>
<svg class="a" style="left:1879px;top:703px" width="12" height="13" viewBox="0 0 12 13"><path d="M4 1.5 V0.5 H8 V1.5 H11.5 V3.5 H0.5 V1.5Z" fill="#dcdcdc"/><path d="M1.5 4.5 H10.5 L9.8 12.5 H2.2Z" fill="#dcdcdc"/><path d="M4 5.5 V11.5 M6 5.5 V11.5 M8 5.5 V11.5" stroke="#555" stroke-width="0.9"/></svg>
<svg class="a" style="left:1907px;top:707px" width="10" height="10" viewBox="0 0 10 10"><rect x="8" y="0" width="1" height="1" fill="#2e2e2e"/><rect x="6" y="2" width="1" height="1" fill="#2e2e2e"/><rect x="8" y="2" width="1" height="1" fill="#2e2e2e"/><rect x="4" y="4" width="1" height="1" fill="#2e2e2e"/><rect x="6" y="4" width="1" height="1" fill="#2e2e2e"/><rect x="8" y="4" width="1" height="1" fill="#2e2e2e"/><rect x="2" y="6" width="1" height="1" fill="#2e2e2e"/><rect x="4" y="6" width="1" height="1" fill="#2e2e2e"/><rect x="6" y="6" width="1" height="1" fill="#2e2e2e"/><rect x="8" y="6" width="1" height="1" fill="#2e2e2e"/><rect x="0" y="8" width="1" height="1" fill="#2e2e2e"/><rect x="2" y="8" width="1" height="1" fill="#2e2e2e"/><rect x="4" y="8" width="1" height="1" fill="#2e2e2e"/><rect x="6" y="8" width="1" height="1" fill="#2e2e2e"/><rect x="8" y="8" width="1" height="1" fill="#2e2e2e"/></svg>
<div class="a" style="left:1636px;top:721px;width:283px;height:320px;background:#535353"></div>
<div class="a" style="left:1636px;top:721px;width:283px;height:17px;background:#3a3a3a;border-bottom:1px solid #2f2f2f"></div>
<div class="a" style="left:1636px;top:721px;width:50px;height:18px;background:#535353;border-right:1px solid #2f2f2f;border-top:1px solid #6a6a6a"></div>
<div class="t b" style="left:1642px;top:723px;color:#f4f4f4;letter-spacing:-0.2px">Calques</div>
<div class="a" style="left:1687px;top:721px;width:53px;height:16px;background:#424242;border-right:1px solid #2f2f2f"></div>
<div class="t b" style="left:1693px;top:723px;color:#a2a2a2;letter-spacing:-0.2px">Couches</div>
<div class="a" style="left:1741px;top:721px;width:45px;height:16px;background:#424242;border-right:1px solid #2f2f2f"></div>
<div class="t b" style="left:1747px;top:723px;color:#a2a2a2;letter-spacing:-0.2px">Tracés</div>
<div class="a" style="left:1636px;top:738px;width:283px;height:1px;background:#6a6a6a"></div><div class="a" style="left:1636px;top:738px;width:50px;height:1px;background:#535353"></div>
<svg class="a" style="left:1901px;top:726px" width="16" height="8" viewBox="0 0 16 8"><path d="M0.5 1.5 H5.5 L3 4.5Z" fill="#d0d0d0"/><path d="M6.5 0.5 H15 M6.5 2.5 H15 M6.5 4.5 H15 M6.5 6.5 H15" stroke="#dcdcdc" stroke-width="1"/></svg>
<div class="dd" style="left:1640px;top:742px;width:108px;height:19px"><svg class="a" style="left:5px;top:3px" width="12" height="12" viewBox="0 0 12 12"><circle cx="7" cy="4.6" r="3.2" fill="none" stroke="#e4e4e4" stroke-width="1.5"/><path d="M4.8 7 L1 10.8" stroke="#e4e4e4" stroke-width="1.8"/></svg><div class="t" style="left:21px;top:2px">Type</div><svg class="ud" style="left:96px;top:4px" viewBox="0 0 7 11"><path d="M0.2 4.4 L3.5 1 L6.8 4.4Z M0.2 6.6 L3.5 10 L6.8 6.6Z" fill="#e6e6e6"/></svg></div>
<svg class="a" style="left:1769px;top:745px" width="14" height="12" viewBox="0 0 14 12"><rect x="0.6" y="0.6" width="12.8" height="10.8" fill="#4a4a4a" stroke="#dcdcdc" stroke-width="1.2"/><path d="M2 10 L5 5.5 L7.5 8.5 L9.5 6.5 L12 10Z" fill="#dcdcdc"/><circle cx="9.8" cy="3.6" r="1.2" fill="#dcdcdc"/></svg>
<svg class="a" style="left:1794px;top:746px" width="12" height="12" viewBox="0 0 12 12"><circle cx="6" cy="6" r="5" fill="#dcdcdc"/><path d="M2.6 9.6 A5 5 0 0 1 9.4 2.6Z" fill="#3c3c3c"/><circle cx="6" cy="6" r="5" fill="none" stroke="#dcdcdc" stroke-width="1.1"/></svg>
<div class="t" style="left:1817px;top:742px;font-family:'Liberation Serif',serif;font-size:17px;line-height:19px;color:#e0e0e0">T</div>
<svg class="a" style="left:1842px;top:745px" width="13" height="13" viewBox="0 0 13 13"><rect x="2" y="2" width="9" height="9" fill="none" stroke="#dcdcdc" stroke-width="1.2"/><rect x="0.3" y="0.3" width="3.2" height="3.2" fill="#dcdcdc"/><rect x="9.5" y="0.3" width="3.2" height="3.2" fill="#dcdcdc"/><rect x="0.3" y="9.5" width="3.2" height="3.2" fill="#dcdcdc"/><rect x="9.5" y="9.5" width="3.2" height="3.2" fill="#dcdcdc"/></svg>
<svg class="a" style="left:1867px;top:745px" width="12" height="13" viewBox="0 0 12 13"><path d="M3.5 0.6 H8.5 L11.4 3.6 V9.4 H6 V5.2 H3.5Z" fill="none" stroke="#dcdcdc" stroke-width="1.1"/><rect x="0.5" y="6.5" width="5" height="6" fill="#dcdcdc"/></svg>
<div class="a" style="left:1903px;top:743px;width:9px;height:17px;background:#3c3c3c;border:1px solid #2e2e2e;border-radius:1px"></div><div class="a" style="left:1904px;top:744px;width:7px;height:7px;background:linear-gradient(#8a8a8a,#6a6a6a)"></div>
<div class="a" style="left:1636px;top:765px;width:283px;height:1px;background:#3e3e3e"></div><div class="a" style="left:1636px;top:766px;width:283px;height:1px;background:#626262"></div>
<div class="dd" style="left:1640px;top:770px;width:163px;height:20px"><div class="t" style="top:3px">Normal</div><svg class="ud" style="left:151px;top:4px" viewBox="0 0 7 11"><path d="M0.2 4.4 L3.5 1 L6.8 4.4Z M0.2 6.6 L3.5 10 L6.8 6.6Z" fill="#e6e6e6"/></svg></div>
<div class="lbl" style="left:1810px;top:772px">Opacité :</div>
<div class="inp" style="left:1855px;top:770px;width:57px;height:20px"><div class="t" style="left:5px;top:3px">100 %</div><div class="btn" style="width:19px"></div></div>
<div class="a" style="left:1636px;top:794px;width:283px;height:1px;background:#3e3e3e"></div><div class="a" style="left:1636px;top:795px;width:283px;height:1px;background:#626262"></div>
<div class="lbl" style="left:1642px;top:802px">Verrou :</div>
<svg class="a" style="left:1687px;top:802px" width="12" height="12" viewBox="0 0 12 12"><rect x="0.5" y="0.5" width="11" height="11" fill="#555" stroke="#d4d4d4"/><path d="M1 1 H4.3 V4.3 H1Z M7.6 1 H11 V4.3 H7.6Z M4.3 4.3 H7.6 V7.6 H4.3Z M1 7.6 H4.3 V11 H1Z M7.6 7.6 H11 V11 H7.6Z" fill="#d4d4d4"/></svg>
<svg class="a" style="left:1707px;top:800px" width="18" height="15" viewBox="0 0 18 15"><path d="M16.3 0.3 L17.7 1.3 L10.6 10.6 L8.4 9Z" fill="#dcdcdc"/><path d="M7.8 9.2 L10.5 11.3 C9.6 13.6 6 14.8 0.6 13.2 C4 12.8 5.2 10.6 7.8 9.2Z" fill="#dcdcdc"/></svg>
<svg class="a" style="left:1731px;top:801px" width="14" height="14" viewBox="0 0 14 14"><path d="M7 0.3 L9.6 3.2 H7.8 V6.2 H10.8 V4.4 L13.7 7 L10.8 9.6 V7.8 H7.8 V10.8 H9.6 L7 13.7 L4.4 10.8 H6.2 V7.8 H3.2 V9.6 L0.3 7 L3.2 4.4 V6.2 H6.2 V3.2 H4.4Z" fill="#dcdcdc"/></svg>
<svg class="a" style="left:1754px;top:801px" width="12" height="14" viewBox="0 0 12 14"><path d="M3 6 V4 C3 0.6 9 0.6 9 4 V6" fill="none" stroke="#dcdcdc" stroke-width="1.6"/><rect x="1" y="6" width="10" height="7.4" fill="#dcdcdc"/><rect x="5.2" y="8.2" width="1.6" height="3" fill="#444"/></svg>
<div class="lbl" style="left:1821px;top:800px">Fond :</div>
<div class="inp" style="left:1855px;top:798px;width:57px;height:19px"><div class="t" style="left:5px;top:2px">100 %</div><div class="btn" style="width:19px"></div></div>
<div class="a" style="left:1636px;top:823px;width:268px;height:198px;background:#474747;border-top:1px solid #3a3a3a"></div>
<div class="a" style="left:1636px;top:824px;width:268px;height:38px;background:#535353"></div>
<div class="a" style="left:1667px;top:824px;width:237px;height:38px;background:#6b7d99"></div>
<div class="a" style="left:1636px;top:862px;width:268px;height:1px;background:#3e3e3e"></div>
<div class="a" style="left:1636px;top:863px;width:268px;height:39px;background:#535353"></div>
<div class="a" style="left:1636px;top:902px;width:268px;height:1px;background:#3e3e3e"></div>
<div class="a" style="left:1666px;top:824px;width:1px;height:78px;background:#444"></div>
<svg class="a" style="left:1644px;top:839px" width="13" height="9" viewBox="0 0 13 9"><path d="M0.5 4.5 C3 0.2 10 0.2 12.5 4.5 C10 8.8 3 8.8 0.5 4.5Z" fill="#e4e4e4"/><circle cx="6.5" cy="4.2" r="2.5" fill="#444"/><circle cx="5.7" cy="3.4" r=".9" fill="#e4e4e4"/></svg>
<svg class="a" style="left:1644px;top:878px" width="13" height="9" viewBox="0 0 13 9"><path d="M0.5 4.5 C3 0.2 10 0.2 12.5 4.5 C10 8.8 3 8.8 0.5 4.5Z" fill="#e4e4e4"/><circle cx="6.5" cy="4.2" r="2.5" fill="#444"/><circle cx="5.7" cy="3.4" r=".9" fill="#e4e4e4"/></svg>
<div class="a" style="left:1670px;top:827px;width:24px;height:32px;border:1px solid #111;background-color:#fff;background-image:linear-gradient(45deg,#ccc 25%,transparent 25%,transparent 75%,#ccc 75%),linear-gradient(45deg,#ccc 25%,transparent 25%,transparent 75%,#ccc 75%);background-size:8px 8px;background-position:0 0,4px 4px"></div>
<svg class="a" style="left:1668px;top:825px" width="28" height="36" viewBox="-1 -1 28 36"><path d="M-0.5 5 V-0.5 H5 M22 -0.5 H26.5 V5 M26.5 30 V34.5 H22 M5 34.5 H-0.5 V30" fill="none" stroke="#fff" stroke-width="1"/><ellipse cx="9" cy="12.5" rx="2.6" ry="5" fill="#5a00ff"/><ellipse cx="14.5" cy="14" rx="4.4" ry="5.2" fill="#1fba55"/><ellipse cx="13" cy="13.5" rx="3.4" ry="4.8" fill="#2d7ab0"/></svg>
<div class="t" style="left:1704px;top:838px;color:#fff">a</div>
<div class="a" style="left:1670px;top:866px;width:24px;height:32px;border:1px solid #111;background:#fff"></div>
<div class="t" style="left:1704px;top:877px;color:#f4f4f4">Calque 0</div>
<div class="a" style="left:1904px;top:823px;width:15px;height:198px;background:#515151;border-left:1px solid #3e3e3e"></div>
<div class="a" style="left:1636px;top:1020px;width:283px;height:1px;background:#3e3e3e"></div><div class="a" style="left:1636px;top:1021px;width:283px;height:1px;background:#626262"></div>
<svg class="a" style="left:1716px;top:1027px" width="15" height="8" viewBox="0 0 15 8"><rect x="0.8" y="0.8" width="7.4" height="6.4" rx="3.2" fill="none" stroke="#9a9a9a" stroke-width="1.5"/><rect x="6.8" y="0.8" width="7.4" height="6.4" rx="3.2" fill="none" stroke="#9a9a9a" stroke-width="1.5"/></svg>
<div class="t" style="left:1744px;top:1022px;font-family:'Liberation Serif',serif;font-style:italic;font-size:15px;line-height:16px;color:#e0e0e0">fx</div><div class="a" style="left:1758px;top:1035px;border:2px solid transparent;border-top:3px solid #ddd;border-bottom:0"></div>
<svg class="a" style="left:1771px;top:1025px" width="14" height="12" viewBox="0 0 14 12"><rect x="0.5" y="0.5" width="13" height="11" fill="#dcdcdc"/><circle cx="7" cy="6" r="3" fill="#444"/></svg>
<svg class="a" style="left:1798px;top:1024px" width="17" height="14" viewBox="0 0 17 14"><circle cx="6" cy="6" r="5" fill="#dcdcdc"/><path d="M2.6 9.6 A5 5 0 0 1 9.4 2.6Z" fill="#444"/><circle cx="6" cy="6" r="5" fill="none" stroke="#dcdcdc" stroke-width="1.1"/><path d="M12.5 10.5 H16.5 L14.5 13Z" fill="#ddd"/></svg>
<svg class="a" style="left:1825px;top:1025px" width="13" height="11" viewBox="0 0 13 11"><path d="M0.5 1 H5 L6.2 2.6 H12.5 V10.5 H0.5Z" fill="#dcdcdc"/></svg>
<svg class="a" style="left:1852px;top:1025px" width="12" height="12" viewBox="0 0 12 12"><path d="M1 0.5 H11.5 V11.5 H4.5 V7.5 H1Z" fill="#dcdcdc"/><path d="M0.8 8.5 H3.6 V11.5Z" fill="#dcdcdc"/></svg>
<svg class="a" style="left:1879px;top:1025px" width="12" height="13" viewBox="0 0 12 13"><path d="M4 1.5 V0.5 H8 V1.5 H11.5 V3.5 H0.5 V1.5Z" fill="#dcdcdc"/><path d="M1.5 4.5 H10.5 L9.8 12.5 H2.2Z" fill="#dcdcdc"/><path d="M4 5.5 V11.5 M6 5.5 V11.5 M8 5.5 V11.5" stroke="#555" stroke-width="0.9"/></svg>
<!-- DOCK_END -->
<!-- STATUS -->
<div class="a" style="left:0;top:1022px;width:1594px;height:19px;background:linear-gradient(#393939,#434343);border-top:1px solid #2a2a2a;border-bottom:2px solid #232323"></div>
<div class="a" style="left:0;top:1023px;width:49px;height:16px;background:#3b3b3b"></div>
<div class="a" style="left:49px;top:1023px;width:207px;height:16px;background:#4e4e4e"></div>
<div class="t" style="left:13px;top:1025px;color:#f0f0f0">25 %</div>
<svg class="a" style="left:51px;top:1026px" width="20" height="11" viewBox="0 0 20 11"><rect x="0" y="0" width="19.5" height="10.5" rx="2" fill="#b2b2b2"/><circle cx="5" cy="5.2" r="2.6" fill="none" stroke="#2e2e2e" stroke-width="2" stroke-dasharray="1.4 0.7"/><circle cx="5" cy="5.2" r="1.8" fill="#2e2e2e"/><circle cx="5" cy="5.2" r="0.8" fill="#b2b2b2"/><path d="M10.5 4 H15.5 V8" fill="none" stroke="#2e2e2e" stroke-width="1.3"/><path d="M9.2 4 L11.8 1.8 V6.2Z M15.5 9.6 L13.3 7 H17.7Z" fill="#2e2e2e"/></svg>
<div class="t" style="left:109px;top:1025px;color:#f0f0f0">Doc : 24,9 Mo/24,0 Mo</div>
<div class="a" style="left:247px;top:1027px;border:4.5px solid transparent;border-left:7px solid #f0f0f0;border-right:0"></div>
<div class="a" style="left:1577px;top:1023px;width:17px;height:16px;background:#494949"></div>
</body></html>
